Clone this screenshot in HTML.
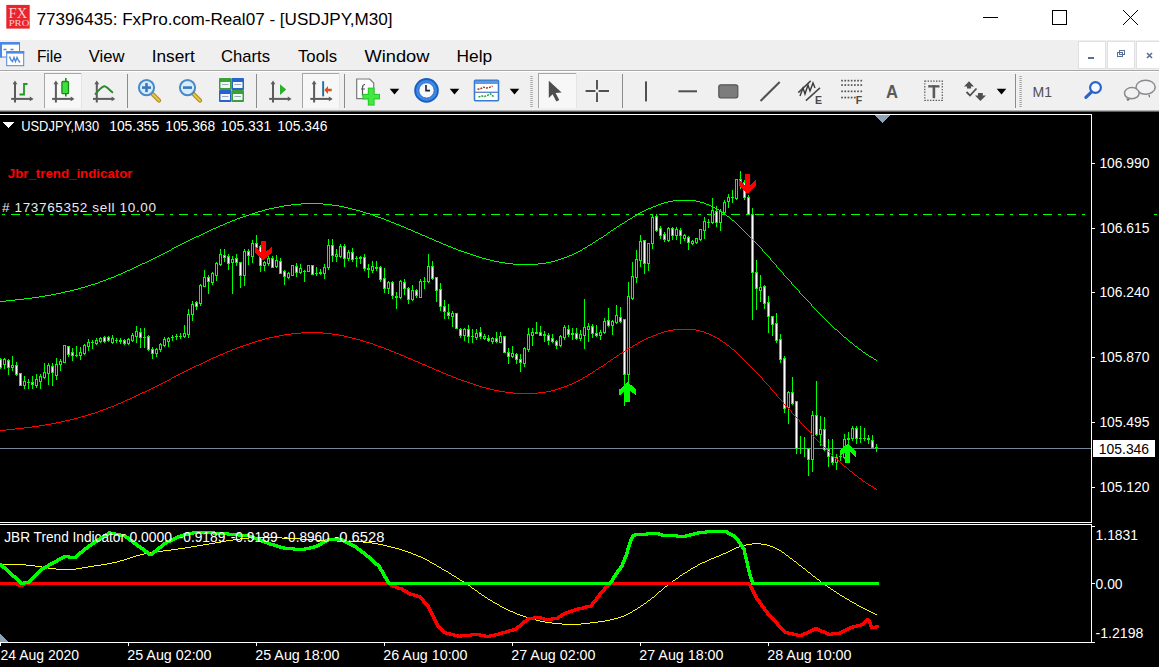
<!DOCTYPE html>
<html><head><meta charset="utf-8"><style>
html,body{margin:0;padding:0;width:1159px;height:667px;overflow:hidden;background:#000;}
svg{position:absolute;left:0;top:0;}
text{font-family:"Liberation Sans", sans-serif;}
.t{position:absolute;font-family:"Liberation Sans", sans-serif;white-space:nowrap;}
</style></head><body>
<svg width="1159" height="667" viewBox="0 0 1159 667" shape-rendering="crispEdges">
<rect x="0" y="0" width="1159" height="40" fill="#fff"/>
<rect x="0" y="40" width="1159" height="30" fill="#efefef"/>
<rect x="0" y="70" width="1159" height="1" fill="#a8a8a8"/>
<rect x="0" y="71" width="1159" height="1" fill="#fff"/>
<rect x="0" y="72" width="1159" height="38" fill="#f0f0f0"/>
<rect x="0" y="110" width="1159" height="1" fill="#b4b4b4"/>
<rect x="0" y="111" width="1159" height="1" fill="#606060"/>
<rect x="0" y="112" width="1159" height="555" fill="#000"/><path fill="#00ff00" d="M2 214h3v1h-3zM11 214h9v1h-9zM26 214h3v1h-3zM35 214h9v1h-9zM50 214h3v1h-3zM59 214h9v1h-9zM74 214h3v1h-3zM83 214h9v1h-9zM98 214h3v1h-3zM107 214h9v1h-9zM122 214h3v1h-3zM131 214h9v1h-9zM146 214h3v1h-3zM155 214h9v1h-9zM170 214h3v1h-3zM179 214h9v1h-9zM194 214h3v1h-3zM203 214h9v1h-9zM218 214h3v1h-3zM227 214h9v1h-9zM242 214h3v1h-3zM251 214h9v1h-9zM266 214h3v1h-3zM275 214h9v1h-9zM290 214h3v1h-3zM299 214h9v1h-9zM314 214h3v1h-3zM323 214h9v1h-9zM338 214h3v1h-3zM347 214h9v1h-9zM362 214h3v1h-3zM371 214h9v1h-9zM386 214h3v1h-3zM395 214h9v1h-9zM410 214h3v1h-3zM419 214h9v1h-9zM434 214h3v1h-3zM443 214h9v1h-9zM458 214h3v1h-3zM467 214h9v1h-9zM482 214h3v1h-3zM491 214h9v1h-9zM506 214h3v1h-3zM515 214h9v1h-9zM530 214h3v1h-3zM539 214h9v1h-9zM554 214h3v1h-3zM563 214h9v1h-9zM578 214h3v1h-3zM587 214h9v1h-9zM602 214h3v1h-3zM611 214h9v1h-9zM626 214h3v1h-3zM635 214h9v1h-9zM650 214h3v1h-3zM659 214h9v1h-9zM674 214h3v1h-3zM683 214h9v1h-9zM698 214h3v1h-3zM707 214h9v1h-9zM722 214h3v1h-3zM731 214h9v1h-9zM746 214h3v1h-3zM755 214h9v1h-9zM770 214h3v1h-3zM779 214h9v1h-9zM794 214h3v1h-3zM803 214h9v1h-9zM818 214h3v1h-3zM827 214h9v1h-9zM842 214h3v1h-3zM851 214h9v1h-9zM866 214h3v1h-3zM875 214h9v1h-9zM890 214h3v1h-3zM899 214h9v1h-9zM914 214h3v1h-3zM923 214h9v1h-9zM938 214h3v1h-3zM947 214h9v1h-9zM962 214h3v1h-3zM971 214h9v1h-9zM986 214h3v1h-3zM995 214h9v1h-9zM1010 214h3v1h-3zM1019 214h9v1h-9zM1034 214h3v1h-3zM1043 214h9v1h-9zM1058 214h3v1h-3zM1067 214h9v1h-9zM1082 214h3v1h-3z"/><rect x="1154" y="214" width="3" height="1" fill="#00ff00"/><rect x="0" y="448" width="1091" height="1" fill="#778899"/><path fill="#00ff00" d="M0 358h1v11h-1zM-1 359h3v9h-3zM4 358h1v11h-1zM3 359h3v6h-3zM8 359h1v16h-1zM7 360h3v8h-3zM12 356h1v15h-1zM11 365h3v3h-3zM16 362h1v14h-1zM15 365h3v10h-3zM20 373h1v13h-1zM19 373h3v13h-3zM24 376h1v13h-1zM23 381h3v5h-3zM28 379h1v10h-1zM27 382h3v1h-3zM32 376h1v13h-1zM31 382h3v3h-3zM36 374h1v14h-1zM35 379h3v7h-3zM40 374h1v15h-1zM39 376h3v6h-3zM44 363h1v16h-1zM43 372h3v6h-3zM48 363h1v22h-1zM47 365h3v9h-3zM52 363h1v23h-1zM51 366h3v7h-3zM56 358h1v22h-1zM55 364h3v12h-3zM60 359h1v12h-1zM59 361h3v4h-3zM64 345h1v18h-1zM63 345h3v18h-3zM68 346h1v11h-1zM67 346h3v9h-3zM72 348h1v13h-1zM71 352h3v4h-3zM76 346h1v11h-1zM75 355h3v1h-3zM80 347h1v13h-1zM79 352h3v4h-3zM84 344h1v11h-1zM83 345h3v9h-3zM88 339h1v12h-1zM87 342h3v5h-3zM92 340h1v9h-1zM91 342h3v1h-3zM96 338h1v7h-1zM95 340h3v4h-3zM100 337h1v6h-1zM99 338h3v4h-3zM104 336h1v7h-1zM103 337h3v5h-3zM108 336h1v6h-1zM107 337h3v4h-3zM112 335h1v9h-1zM111 338h3v5h-3zM116 338h1v5h-1zM115 340h3v1h-3zM120 338h1v6h-1zM119 340h3v2h-3zM124 339h1v6h-1zM123 340h3v4h-3zM128 338h1v7h-1zM127 339h3v5h-3zM132 333h1v9h-1zM131 335h3v6h-3zM136 326h1v17h-1zM135 331h3v6h-3zM140 328h1v20h-1zM139 332h3v6h-3zM144 328h1v20h-1zM143 337h3v1h-3zM148 335h1v16h-1zM147 336h3v14h-3zM152 347h1v12h-1zM151 349h3v5h-3zM156 348h1v9h-1zM155 349h3v5h-3zM160 343h1v9h-1zM159 344h3v6h-3zM164 337h1v10h-1zM163 339h3v7h-3zM168 337h1v10h-1zM167 338h3v4h-3zM172 335h1v6h-1zM171 337h3v1h-3zM176 334h1v6h-1zM175 336h3v1h-3zM180 333h1v6h-1zM179 336h3v1h-3zM184 325h1v13h-1zM183 333h3v4h-3zM188 309h1v29h-1zM187 314h3v21h-3zM192 301h1v20h-1zM191 304h3v11h-3zM196 301h1v9h-1zM195 302h3v5h-3zM200 284h1v22h-1zM199 285h3v19h-3zM204 270h1v17h-1zM203 277h3v10h-3zM208 275h1v19h-1zM207 277h3v5h-3zM212 272h1v13h-1zM211 273h3v10h-3zM216 262h1v19h-1zM215 263h3v13h-3zM220 249h1v17h-1zM219 254h3v11h-3zM224 249h1v13h-1zM223 255h3v3h-3zM228 254h1v16h-1zM227 256h3v8h-3zM232 256h1v38h-1zM231 259h3v4h-3zM236 254h1v12h-1zM235 258h3v5h-3zM240 262h1v26h-1zM239 262h3v14h-3zM244 249h1v37h-1zM243 251h3v25h-3zM248 249h1v16h-1zM247 251h3v5h-3zM252 240h1v23h-1zM251 243h3v14h-3zM256 235h1v15h-1zM255 243h3v5h-3zM260 245h1v27h-1zM259 246h3v20h-3zM264 261h1v10h-1zM263 262h3v4h-3zM268 256h1v10h-1zM267 258h3v6h-3zM272 256h1v12h-1zM271 258h3v10h-3zM276 255h1v13h-1zM275 260h3v7h-3zM280 258h1v16h-1zM279 261h3v13h-3zM284 270h1v15h-1zM283 271h3v6h-3zM288 272h1v7h-1zM287 273h3v5h-3zM292 265h1v11h-1zM291 265h3v11h-3zM296 263h1v14h-1zM295 266h3v7h-3zM300 264h1v10h-1zM299 268h3v5h-3zM304 270h1v12h-1zM303 271h3v1h-3zM308 265h1v7h-1zM307 265h3v7h-3zM312 265h1v10h-1zM311 265h3v10h-3zM316 267h1v9h-1zM315 273h3v1h-3zM320 269h1v6h-1zM319 272h3v2h-3zM324 264h1v15h-1zM323 267h3v7h-3zM328 239h1v31h-1zM327 245h3v23h-3zM332 239h1v23h-1zM331 245h3v11h-3zM336 249h1v13h-1zM335 254h3v3h-3zM340 244h1v14h-1zM339 246h3v11h-3zM344 244h1v23h-1zM343 246h3v13h-3zM348 250h1v11h-1zM347 252h3v7h-3zM352 248h1v14h-1zM351 252h3v8h-3zM356 256h1v11h-1zM355 258h3v1h-3zM360 256h1v8h-1zM359 257h3v2h-3zM364 254h1v17h-1zM363 257h3v12h-3zM368 264h1v14h-1zM367 268h3v2h-3zM372 261h1v12h-1zM371 266h3v5h-3zM376 261h1v10h-1zM375 267h3v2h-3zM380 266h1v16h-1zM379 267h3v13h-3zM384 268h1v25h-1zM383 278h3v11h-3zM388 281h1v13h-1zM387 282h3v7h-3zM392 281h1v18h-1zM391 282h3v14h-3zM396 292h1v17h-1zM395 296h3v2h-3zM400 280h1v19h-1zM399 281h3v17h-3zM404 279h1v16h-1zM403 282h3v7h-3zM408 287h1v17h-1zM407 288h3v12h-3zM412 285h1v16h-1zM411 290h3v10h-3zM416 289h1v9h-1zM415 290h3v6h-3zM420 279h1v19h-1zM419 281h3v17h-3zM424 277h1v12h-1zM423 281h3v1h-3zM428 254h1v29h-1zM427 266h3v16h-3zM432 261h1v19h-1zM431 266h3v13h-3zM436 277h1v25h-1zM435 277h3v14h-3zM440 283h1v28h-1zM439 289h3v18h-3zM444 300h1v19h-1zM443 306h3v6h-3zM448 304h1v15h-1zM447 312h3v4h-3zM452 311h1v16h-1zM451 313h3v4h-3zM456 313h1v16h-1zM455 313h3v16h-3zM460 328h1v10h-1zM459 329h3v7h-3zM464 328h1v13h-1zM463 329h3v7h-3zM468 325h1v18h-1zM467 329h3v8h-3zM472 329h1v14h-1zM471 336h3v1h-3zM476 329h1v11h-1zM475 333h3v5h-3zM480 327h1v12h-1zM479 332h3v5h-3zM484 334h1v6h-1zM483 336h3v3h-3zM488 335h1v7h-1zM487 338h3v3h-3zM492 337h1v7h-1zM491 338h3v4h-3zM496 332h1v11h-1zM495 338h3v4h-3zM500 332h1v11h-1zM499 336h3v7h-3zM504 336h1v17h-1zM503 336h3v17h-3zM508 348h1v16h-1zM507 352h3v5h-3zM512 346h1v12h-1zM511 353h3v4h-3zM516 353h1v11h-1zM515 354h3v6h-3zM520 354h1v18h-1zM519 359h3v4h-3zM524 347h1v20h-1zM523 348h3v16h-3zM528 328h1v24h-1zM527 334h3v16h-3zM532 328h1v18h-1zM531 332h3v4h-3zM536 322h1v12h-1zM535 332h3v2h-3zM540 326h1v10h-1zM539 332h3v4h-3zM544 331h1v11h-1zM543 334h3v2h-3zM548 333h1v12h-1zM547 335h3v6h-3zM552 334h1v9h-1zM551 338h3v4h-3zM556 340h1v9h-1zM555 341h3v5h-3zM560 335h1v12h-1zM559 336h3v10h-3zM564 325h1v15h-1zM563 327h3v11h-3zM568 325h1v12h-1zM567 329h3v6h-3zM572 328h1v12h-1zM571 333h3v2h-3zM576 328h1v12h-1zM575 333h3v6h-3zM580 330h1v11h-1zM579 334h3v5h-3zM584 299h1v50h-1zM583 327h3v9h-3zM588 323h1v19h-1zM587 326h3v4h-3zM592 324h1v14h-1zM591 326h3v8h-3zM596 325h1v12h-1zM595 333h3v3h-3zM600 330h1v10h-1zM599 332h3v4h-3zM604 318h1v16h-1zM603 321h3v12h-3zM608 308h1v19h-1zM607 320h3v6h-3zM612 320h1v15h-1zM611 321h3v5h-3zM616 305h1v19h-1zM615 315h3v8h-3zM620 307h1v16h-1zM619 317h3v5h-3zM624 319h1v87h-1zM623 319h3v56h-3zM628 282h1v101h-1zM627 296h3v79h-3zM632 262h1v38h-1zM631 276h3v23h-3zM636 250h1v33h-1zM635 259h3v19h-3zM640 235h1v32h-1zM639 241h3v20h-3zM644 240h1v34h-1zM643 240h3v24h-3zM648 243h1v28h-1zM647 243h3v21h-3zM652 214h1v35h-1zM651 217h3v27h-3zM656 214h1v18h-1zM655 216h3v15h-3zM660 226h1v13h-1zM659 228h3v8h-3zM664 232h1v10h-1zM663 234h3v6h-3zM668 227h1v15h-1zM667 228h3v13h-3zM672 227h1v13h-1zM671 228h3v8h-3zM676 227h1v13h-1zM675 229h3v7h-3zM680 228h1v16h-1zM679 230h3v6h-3zM684 234h1v7h-1zM683 235h3v4h-3zM688 236h1v14h-1zM687 237h3v6h-3zM692 240h1v5h-1zM691 241h3v3h-3zM696 238h1v6h-1zM695 238h3v5h-3zM700 229h1v12h-1zM699 229h3v11h-3zM704 217h1v22h-1zM703 221h3v10h-3zM708 219h1v9h-1zM707 222h3v1h-3zM712 198h1v26h-1zM711 210h3v13h-3zM716 206h1v21h-1zM715 211h3v12h-3zM720 209h1v22h-1zM719 211h3v12h-3zM724 200h1v15h-1zM723 202h3v11h-3zM728 194h1v14h-1zM727 197h3v5h-3zM732 190h1v13h-1zM731 197h3v1h-3zM736 179h1v21h-1zM735 179h3v20h-3zM740 171h1v18h-1zM739 179h3v4h-3zM744 180h1v20h-1zM743 182h3v16h-3zM748 195h1v20h-1zM747 197h3v18h-3zM752 208h1v112h-1zM751 214h3v59h-3zM756 260h1v50h-1zM755 272h3v17h-3zM760 275h1v27h-1zM759 287h3v4h-3zM764 285h1v24h-1zM763 286h3v18h-3zM768 296h1v37h-1zM767 302h3v15h-3zM772 316h1v20h-1zM771 316h3v9h-3zM776 313h1v30h-1zM775 323h3v18h-3zM780 334h1v29h-1zM779 339h3v21h-3zM784 356h1v57h-1zM783 358h3v51h-3zM788 391h1v33h-1zM787 392h3v16h-3zM792 377h1v28h-1zM791 392h3v12h-3zM796 401h1v53h-1zM795 401h3v48h-3zM800 436h1v18h-1zM799 448h3v1h-3zM804 437h1v20h-1zM803 448h3v1h-3zM808 448h1v28h-1zM807 448h3v12h-3zM812 411h1v61h-1zM811 415h3v45h-3zM816 381h1v55h-1zM815 415h3v20h-3zM820 416h1v30h-1zM819 429h3v6h-3zM824 417h1v34h-1zM823 429h3v21h-3zM828 439h1v28h-1zM827 449h3v8h-3zM832 439h1v26h-1zM831 456h3v7h-3zM836 454h1v16h-1zM835 457h3v6h-3zM840 450h1v11h-1zM839 456h3v1h-3zM844 434h1v25h-1zM843 439h3v19h-3zM848 432h1v12h-1zM847 438h3v2h-3zM852 426h1v15h-1zM851 428h3v11h-3zM856 426h1v18h-1zM855 428h3v11h-3zM860 426h1v17h-1zM859 438h3v1h-3zM864 428h1v13h-1zM863 438h3v1h-3zM868 435h1v9h-1zM867 438h3v2h-3zM872 435h1v13h-1zM871 440h3v8h-3zM876 444h1v8h-1zM875 447h3v1h-3z"/><path fill="#ffffff" d="M0 360h1v7h-1zM8 361h1v6h-1zM16 366h1v8h-1zM20 374h1v11h-1zM32 383h1v1h-1zM52 367h1v5h-1zM68 347h1v7h-1zM72 353h1v2h-1zM104 338h1v3h-1zM108 338h1v2h-1zM124 341h1v2h-1zM140 333h1v4h-1zM148 337h1v12h-1zM152 350h1v3h-1zM196 303h1v3h-1zM208 278h1v3h-1zM224 256h1v1h-1zM228 257h1v6h-1zM236 259h1v3h-1zM240 263h1v12h-1zM248 252h1v3h-1zM256 244h1v3h-1zM260 247h1v18h-1zM272 259h1v8h-1zM280 262h1v11h-1zM284 272h1v4h-1zM296 267h1v5h-1zM312 266h1v8h-1zM332 246h1v9h-1zM344 247h1v11h-1zM352 253h1v6h-1zM364 258h1v10h-1zM380 268h1v11h-1zM384 279h1v9h-1zM392 283h1v12h-1zM404 283h1v5h-1zM408 289h1v10h-1zM416 291h1v4h-1zM432 267h1v11h-1zM436 278h1v12h-1zM440 290h1v16h-1zM444 307h1v4h-1zM448 313h1v2h-1zM456 314h1v14h-1zM460 330h1v5h-1zM468 330h1v6h-1zM480 333h1v3h-1zM488 339h1v1h-1zM496 339h1v2h-1zM504 337h1v15h-1zM508 353h1v3h-1zM516 355h1v4h-1zM520 360h1v2h-1zM540 333h1v2h-1zM548 336h1v4h-1zM552 339h1v2h-1zM556 342h1v3h-1zM568 330h1v4h-1zM576 334h1v4h-1zM592 327h1v6h-1zM596 334h1v1h-1zM608 321h1v4h-1zM620 318h1v3h-1zM624 320h1v54h-1zM644 241h1v22h-1zM656 217h1v13h-1zM660 229h1v6h-1zM664 235h1v4h-1zM672 229h1v6h-1zM680 231h1v4h-1zM688 238h1v4h-1zM716 212h1v10h-1zM740 180h1v2h-1zM744 183h1v14h-1zM748 198h1v16h-1zM752 215h1v57h-1zM756 273h1v15h-1zM764 287h1v16h-1zM768 303h1v13h-1zM772 317h1v7h-1zM776 324h1v16h-1zM780 340h1v19h-1zM784 359h1v49h-1zM792 393h1v10h-1zM796 402h1v46h-1zM808 449h1v10h-1zM816 416h1v18h-1zM824 430h1v19h-1zM828 450h1v6h-1zM832 457h1v5h-1zM856 429h1v9h-1zM872 441h1v6h-1z"/><path fill="#000000" d="M4 360h1v4h-1zM12 366h1v1h-1zM24 382h1v3h-1zM36 380h1v5h-1zM40 377h1v4h-1zM44 373h1v4h-1zM48 366h1v7h-1zM56 365h1v10h-1zM60 362h1v2h-1zM64 346h1v16h-1zM80 353h1v2h-1zM84 346h1v7h-1zM88 343h1v3h-1zM96 341h1v2h-1zM100 339h1v2h-1zM112 339h1v3h-1zM128 340h1v3h-1zM132 336h1v4h-1zM136 332h1v4h-1zM156 350h1v3h-1zM160 345h1v4h-1zM164 340h1v5h-1zM168 339h1v2h-1zM184 334h1v2h-1zM188 315h1v19h-1zM192 305h1v9h-1zM200 286h1v17h-1zM204 278h1v8h-1zM212 274h1v8h-1zM216 264h1v11h-1zM220 255h1v9h-1zM232 260h1v2h-1zM244 252h1v23h-1zM252 244h1v12h-1zM264 263h1v2h-1zM268 259h1v4h-1zM276 261h1v5h-1zM288 274h1v3h-1zM292 266h1v9h-1zM300 269h1v3h-1zM308 266h1v5h-1zM324 268h1v5h-1zM328 246h1v21h-1zM336 255h1v1h-1zM340 247h1v9h-1zM348 253h1v5h-1zM372 267h1v3h-1zM388 283h1v5h-1zM400 282h1v15h-1zM412 291h1v8h-1zM420 282h1v15h-1zM428 267h1v14h-1zM452 314h1v2h-1zM464 330h1v5h-1zM476 334h1v3h-1zM484 337h1v1h-1zM492 339h1v2h-1zM500 337h1v5h-1zM512 354h1v2h-1zM524 349h1v14h-1zM528 335h1v14h-1zM532 333h1v2h-1zM560 337h1v8h-1zM564 328h1v9h-1zM580 335h1v3h-1zM584 328h1v7h-1zM588 327h1v2h-1zM600 333h1v2h-1zM604 322h1v10h-1zM612 322h1v3h-1zM616 316h1v6h-1zM628 297h1v77h-1zM632 277h1v21h-1zM636 260h1v17h-1zM640 242h1v18h-1zM648 244h1v19h-1zM652 218h1v25h-1zM668 229h1v11h-1zM676 230h1v5h-1zM684 236h1v2h-1zM692 242h1v1h-1zM696 239h1v3h-1zM700 230h1v9h-1zM704 222h1v8h-1zM712 211h1v11h-1zM720 212h1v10h-1zM724 203h1v9h-1zM728 198h1v3h-1zM736 180h1v18h-1zM760 288h1v2h-1zM788 393h1v14h-1zM812 416h1v43h-1zM820 430h1v4h-1zM836 458h1v4h-1zM844 440h1v17h-1zM852 429h1v9h-1z"/><path fill="#00ff00" d="M0 301h1v1h-1zM1 301h1v1h-1zM2 301h1v1h-1zM3 301h1v1h-1zM4 301h1v1h-1zM5 301h1v1h-1zM6 300h1v1h-1zM7 300h1v1h-1zM8 300h1v1h-1zM9 300h1v1h-1zM10 300h1v1h-1zM11 300h1v1h-1zM12 300h1v1h-1zM13 300h1v1h-1zM14 300h1v1h-1zM15 299h1v1h-1zM16 299h1v1h-1zM17 299h1v1h-1zM18 299h1v1h-1zM19 299h1v1h-1zM20 299h1v1h-1zM21 299h1v1h-1zM22 299h1v1h-1zM23 299h1v1h-1zM24 298h1v1h-1zM25 298h1v1h-1zM26 298h1v1h-1zM27 298h1v1h-1zM28 298h1v1h-1zM29 298h1v1h-1zM30 298h1v1h-1zM31 298h1v1h-1zM32 297h1v1h-1zM33 297h1v1h-1zM34 297h1v1h-1zM35 297h1v1h-1zM36 297h1v1h-1zM37 297h1v1h-1zM38 297h1v1h-1zM39 296h1v1h-1zM40 296h1v1h-1zM41 296h1v1h-1zM42 296h1v1h-1zM43 296h1v1h-1zM44 296h1v1h-1zM45 295h1v1h-1zM46 295h1v1h-1zM47 295h1v1h-1zM48 295h1v1h-1zM49 295h1v1h-1zM50 295h1v1h-1zM51 294h1v1h-1zM52 294h1v1h-1zM53 294h1v1h-1zM54 294h1v1h-1zM55 294h1v1h-1zM56 293h1v1h-1zM57 293h1v1h-1zM58 293h1v1h-1zM59 293h1v1h-1zM60 293h1v1h-1zM61 292h1v1h-1zM62 292h1v1h-1zM63 292h1v1h-1zM64 292h1v1h-1zM65 291h1v1h-1zM66 291h1v1h-1zM67 291h1v1h-1zM68 291h1v1h-1zM69 291h1v1h-1zM70 290h1v1h-1zM71 290h1v1h-1zM72 290h1v1h-1zM73 290h1v1h-1zM74 289h1v1h-1zM75 289h1v1h-1zM76 289h1v1h-1zM77 289h1v1h-1zM78 288h1v1h-1zM79 288h1v1h-1zM80 288h1v1h-1zM81 287h1v1h-1zM82 287h1v1h-1zM83 287h1v1h-1zM84 287h1v1h-1zM85 286h1v1h-1zM86 286h1v1h-1zM87 286h1v1h-1zM88 285h1v1h-1zM89 285h1v1h-1zM90 285h1v1h-1zM91 284h1v1h-1zM92 284h1v1h-1zM93 284h1v1h-1zM94 284h1v1h-1zM95 283h1v1h-1zM96 283h1v1h-1zM97 283h1v1h-1zM98 282h1v1h-1zM99 282h1v1h-1zM100 281h1v1h-1zM101 281h1v1h-1zM102 281h1v1h-1zM103 280h1v1h-1zM104 280h1v1h-1zM105 280h1v1h-1zM106 279h1v1h-1zM107 279h1v1h-1zM108 278h1v1h-1zM109 278h1v1h-1zM110 278h1v1h-1zM111 277h1v1h-1zM112 277h1v1h-1zM113 277h1v1h-1zM114 276h1v1h-1zM115 276h1v1h-1zM116 275h1v1h-1zM117 275h1v1h-1zM118 274h1v1h-1zM119 274h1v1h-1zM120 274h1v1h-1zM121 273h1v1h-1zM122 273h1v1h-1zM123 272h1v1h-1zM124 272h1v1h-1zM125 271h1v1h-1zM126 271h1v1h-1zM127 270h1v1h-1zM128 270h1v1h-1zM129 270h1v1h-1zM130 269h1v1h-1zM131 269h1v1h-1zM132 268h1v1h-1zM133 268h1v1h-1zM134 267h1v1h-1zM135 267h1v1h-1zM136 266h1v1h-1zM137 266h1v1h-1zM138 265h1v1h-1zM139 265h1v1h-1zM140 264h1v1h-1zM141 264h1v1h-1zM142 263h1v1h-1zM143 263h1v1h-1zM144 263h1v1h-1zM145 262h1v1h-1zM146 262h1v1h-1zM147 261h1v1h-1zM148 261h1v1h-1zM149 260h1v1h-1zM150 260h1v1h-1zM151 259h1v1h-1zM152 259h1v1h-1zM153 258h1v1h-1zM154 258h1v1h-1zM155 257h1v1h-1zM156 257h1v1h-1zM157 256h1v1h-1zM158 256h1v1h-1zM159 255h1v1h-1zM160 255h1v1h-1zM161 254h1v1h-1zM162 254h1v1h-1zM163 253h1v1h-1zM164 253h1v1h-1zM165 252h1v1h-1zM166 252h1v1h-1zM167 251h1v1h-1zM168 251h1v1h-1zM169 250h1v1h-1zM170 250h1v1h-1zM171 249h1v1h-1zM172 248h1v1h-1zM173 248h1v1h-1zM174 247h1v1h-1zM175 247h1v1h-1zM176 246h1v1h-1zM177 246h1v1h-1zM178 245h1v1h-1zM179 245h1v1h-1zM180 244h1v1h-1zM181 244h1v1h-1zM182 243h1v1h-1zM183 243h1v1h-1zM184 242h1v1h-1zM185 242h1v1h-1zM186 241h1v1h-1zM187 241h1v1h-1zM188 240h1v1h-1zM189 240h1v1h-1zM190 239h1v1h-1zM191 239h1v1h-1zM192 238h1v1h-1zM193 238h1v1h-1zM194 237h1v1h-1zM195 237h1v1h-1zM196 236h1v1h-1zM197 236h1v1h-1zM198 236h1v1h-1zM199 235h1v1h-1zM200 235h1v1h-1zM201 234h1v1h-1zM202 234h1v1h-1zM203 233h1v1h-1zM204 233h1v1h-1zM205 232h1v1h-1zM206 232h1v1h-1zM207 231h1v1h-1zM208 231h1v1h-1zM209 230h1v1h-1zM210 230h1v1h-1zM211 229h1v1h-1zM212 229h1v1h-1zM213 228h1v1h-1zM214 228h1v1h-1zM215 228h1v1h-1zM216 227h1v1h-1zM217 227h1v1h-1zM218 226h1v1h-1zM219 226h1v1h-1zM220 225h1v1h-1zM221 225h1v1h-1zM222 225h1v1h-1zM223 224h1v1h-1zM224 224h1v1h-1zM225 223h1v1h-1zM226 223h1v1h-1zM227 222h1v1h-1zM228 222h1v1h-1zM229 222h1v1h-1zM230 221h1v1h-1zM231 221h1v1h-1zM232 220h1v1h-1zM233 220h1v1h-1zM234 220h1v1h-1zM235 219h1v1h-1zM236 219h1v1h-1zM237 218h1v1h-1zM238 218h1v1h-1zM239 218h1v1h-1zM240 217h1v1h-1zM241 217h1v1h-1zM242 217h1v1h-1zM243 216h1v1h-1zM244 216h1v1h-1zM245 216h1v1h-1zM246 215h1v1h-1zM247 215h1v1h-1zM248 215h1v1h-1zM249 214h1v1h-1zM250 214h1v1h-1zM251 214h1v1h-1zM252 213h1v1h-1zM253 213h1v1h-1zM254 213h1v1h-1zM255 212h1v1h-1zM256 212h1v1h-1zM257 212h1v1h-1zM258 211h1v1h-1zM259 211h1v1h-1zM260 211h1v1h-1zM261 211h1v1h-1zM262 210h1v1h-1zM263 210h1v1h-1zM264 210h1v1h-1zM265 209h1v1h-1zM266 209h1v1h-1zM267 209h1v1h-1zM268 209h1v1h-1zM269 208h1v1h-1zM270 208h1v1h-1zM271 208h1v1h-1zM272 208h1v1h-1zM273 208h1v1h-1zM274 207h1v1h-1zM275 207h1v1h-1zM276 207h1v1h-1zM277 207h1v1h-1zM278 207h1v1h-1zM279 206h1v1h-1zM280 206h1v1h-1zM281 206h1v1h-1zM282 206h1v1h-1zM283 206h1v1h-1zM284 205h1v1h-1zM285 205h1v1h-1zM286 205h1v1h-1zM287 205h1v1h-1zM288 205h1v1h-1zM289 205h1v1h-1zM290 205h1v1h-1zM291 204h1v1h-1zM292 204h1v1h-1zM293 204h1v1h-1zM294 204h1v1h-1zM295 204h1v1h-1zM296 204h1v1h-1zM297 204h1v1h-1zM298 204h1v1h-1zM299 204h1v1h-1zM300 204h1v1h-1zM301 203h1v1h-1zM302 203h1v1h-1zM303 203h1v1h-1zM304 203h1v1h-1zM305 203h1v1h-1zM306 203h1v1h-1zM307 203h1v1h-1zM308 203h1v1h-1zM309 203h1v1h-1zM310 203h1v1h-1zM311 203h1v1h-1zM312 203h1v1h-1zM313 203h1v1h-1zM314 203h1v1h-1zM315 203h1v1h-1zM316 203h1v1h-1zM317 203h1v1h-1zM318 203h1v1h-1zM319 203h1v1h-1zM320 203h1v1h-1zM321 203h1v1h-1zM322 203h1v1h-1zM323 204h1v1h-1zM324 204h1v1h-1zM325 204h1v1h-1zM326 204h1v1h-1zM327 204h1v1h-1zM328 204h1v1h-1zM329 204h1v1h-1zM330 204h1v1h-1zM331 204h1v1h-1zM332 205h1v1h-1zM333 205h1v1h-1zM334 205h1v1h-1zM335 205h1v1h-1zM336 205h1v1h-1zM337 205h1v1h-1zM338 205h1v1h-1zM339 206h1v1h-1zM340 206h1v1h-1zM341 206h1v1h-1zM342 206h1v1h-1zM343 206h1v1h-1zM344 207h1v1h-1zM345 207h1v1h-1zM346 207h1v1h-1zM347 207h1v1h-1zM348 208h1v1h-1zM349 208h1v1h-1zM350 208h1v1h-1zM351 208h1v1h-1zM352 209h1v1h-1zM353 209h1v1h-1zM354 209h1v1h-1zM355 209h1v1h-1zM356 210h1v1h-1zM357 210h1v1h-1zM358 210h1v1h-1zM359 210h1v1h-1zM360 211h1v1h-1zM361 211h1v1h-1zM362 211h1v1h-1zM363 212h1v1h-1zM364 212h1v1h-1zM365 212h1v1h-1zM366 213h1v1h-1zM367 213h1v1h-1zM368 213h1v1h-1zM369 213h1v1h-1zM370 214h1v1h-1zM371 214h1v1h-1zM372 214h1v1h-1zM373 215h1v1h-1zM374 215h1v1h-1zM375 216h1v1h-1zM376 216h1v1h-1zM377 216h1v1h-1zM378 217h1v1h-1zM379 217h1v1h-1zM380 217h1v1h-1zM381 218h1v1h-1zM382 218h1v1h-1zM383 218h1v1h-1zM384 219h1v1h-1zM385 219h1v1h-1zM386 220h1v1h-1zM387 220h1v1h-1zM388 220h1v1h-1zM389 221h1v1h-1zM390 221h1v1h-1zM391 222h1v1h-1zM392 222h1v1h-1zM393 222h1v1h-1zM394 223h1v1h-1zM395 223h1v1h-1zM396 224h1v1h-1zM397 224h1v1h-1zM398 224h1v1h-1zM399 225h1v1h-1zM400 225h1v1h-1zM401 226h1v1h-1zM402 226h1v1h-1zM403 226h1v1h-1zM404 227h1v1h-1zM405 227h1v1h-1zM406 228h1v1h-1zM407 228h1v1h-1zM408 229h1v1h-1zM409 229h1v1h-1zM410 229h1v1h-1zM411 230h1v1h-1zM412 230h1v1h-1zM413 231h1v1h-1zM414 231h1v1h-1zM415 232h1v1h-1zM416 232h1v1h-1zM417 232h1v1h-1zM418 233h1v1h-1zM419 233h1v1h-1zM420 234h1v1h-1zM421 234h1v1h-1zM422 235h1v1h-1zM423 235h1v1h-1zM424 235h1v1h-1zM425 236h1v1h-1zM426 236h1v1h-1zM427 237h1v1h-1zM428 237h1v1h-1zM429 238h1v1h-1zM430 238h1v1h-1zM431 238h1v1h-1zM432 239h1v1h-1zM433 239h1v1h-1zM434 240h1v1h-1zM435 240h1v1h-1zM436 241h1v1h-1zM437 241h1v1h-1zM438 241h1v1h-1zM439 242h1v1h-1zM440 242h1v1h-1zM441 243h1v1h-1zM442 243h1v1h-1zM443 244h1v1h-1zM444 244h1v1h-1zM445 244h1v1h-1zM446 245h1v1h-1zM447 245h1v1h-1zM448 246h1v1h-1zM449 246h1v1h-1zM450 246h1v1h-1zM451 247h1v1h-1zM452 247h1v1h-1zM453 248h1v1h-1zM454 248h1v1h-1zM455 248h1v1h-1zM456 249h1v1h-1zM457 249h1v1h-1zM458 250h1v1h-1zM459 250h1v1h-1zM460 250h1v1h-1zM461 251h1v1h-1zM462 251h1v1h-1zM463 251h1v1h-1zM464 252h1v1h-1zM465 252h1v1h-1zM466 252h1v1h-1zM467 253h1v1h-1zM468 253h1v1h-1zM469 253h1v1h-1zM470 254h1v1h-1zM471 254h1v1h-1zM472 254h1v1h-1zM473 255h1v1h-1zM474 255h1v1h-1zM475 255h1v1h-1zM476 256h1v1h-1zM477 256h1v1h-1zM478 256h1v1h-1zM479 257h1v1h-1zM480 257h1v1h-1zM481 257h1v1h-1zM482 258h1v1h-1zM483 258h1v1h-1zM484 258h1v1h-1zM485 258h1v1h-1zM486 259h1v1h-1zM487 259h1v1h-1zM488 259h1v1h-1zM489 259h1v1h-1zM490 260h1v1h-1zM491 260h1v1h-1zM492 260h1v1h-1zM493 260h1v1h-1zM494 261h1v1h-1zM495 261h1v1h-1zM496 261h1v1h-1zM497 261h1v1h-1zM498 261h1v1h-1zM499 262h1v1h-1zM500 262h1v1h-1zM501 262h1v1h-1zM502 262h1v1h-1zM503 262h1v1h-1zM504 262h1v1h-1zM505 263h1v1h-1zM506 263h1v1h-1zM507 263h1v1h-1zM508 263h1v1h-1zM509 263h1v1h-1zM510 263h1v1h-1zM511 263h1v1h-1zM512 263h1v1h-1zM513 264h1v1h-1zM514 264h1v1h-1zM515 264h1v1h-1zM516 264h1v1h-1zM517 264h1v1h-1zM518 264h1v1h-1zM519 264h1v1h-1zM520 264h1v1h-1zM521 264h1v1h-1zM522 264h1v1h-1zM523 264h1v1h-1zM524 264h1v1h-1zM525 264h1v1h-1zM526 264h1v1h-1zM527 264h1v1h-1zM528 264h1v1h-1zM529 264h1v1h-1zM530 264h1v1h-1zM531 264h1v1h-1zM532 264h1v1h-1zM533 264h1v1h-1zM534 264h1v1h-1zM535 264h1v1h-1zM536 264h1v1h-1zM537 264h1v1h-1zM538 263h1v1h-1zM539 263h1v1h-1zM540 263h1v1h-1zM541 263h1v1h-1zM542 263h1v1h-1zM543 263h1v1h-1zM544 263h1v1h-1zM545 263h1v1h-1zM546 262h1v1h-1zM547 262h1v1h-1zM548 262h1v1h-1zM549 262h1v1h-1zM550 262h1v1h-1zM551 261h1v1h-1zM552 261h1v1h-1zM553 261h1v1h-1zM554 261h1v1h-1zM555 260h1v1h-1zM556 260h1v1h-1zM557 260h1v1h-1zM558 259h1v1h-1zM559 259h1v1h-1zM560 259h1v1h-1zM561 258h1v1h-1zM562 258h1v1h-1zM563 258h1v1h-1zM564 257h1v1h-1zM565 257h1v1h-1zM566 257h1v1h-1zM567 256h1v1h-1zM568 256h1v1h-1zM569 255h1v1h-1zM570 255h1v1h-1zM571 255h1v1h-1zM572 254h1v1h-1zM573 254h1v1h-1zM574 253h1v1h-1zM575 253h1v1h-1zM576 252h1v1h-1zM577 252h1v1h-1zM578 251h1v1h-1zM579 251h1v1h-1zM580 250h1v1h-1zM581 250h1v1h-1zM582 249h1v1h-1zM583 248h1v1h-1zM584 248h1v1h-1zM585 247h1v1h-1zM586 247h1v1h-1zM587 246h1v1h-1zM588 245h1v1h-1zM589 245h1v1h-1zM590 244h1v1h-1zM591 244h1v1h-1zM592 243h1v1h-1zM593 242h1v1h-1zM594 242h1v1h-1zM595 241h1v1h-1zM596 240h1v1h-1zM597 240h1v1h-1zM598 239h1v1h-1zM599 238h1v1h-1zM600 238h1v1h-1zM601 237h1v1h-1zM602 237h1v1h-1zM603 236h1v1h-1zM604 235h1v1h-1zM605 235h1v1h-1zM606 234h1v1h-1zM607 233h1v1h-1zM608 232h1v1h-1zM609 232h1v1h-1zM610 231h1v1h-1zM611 230h1v1h-1zM612 230h1v1h-1zM613 229h1v1h-1zM614 228h1v1h-1zM615 228h1v1h-1zM616 227h1v1h-1zM617 226h1v1h-1zM618 226h1v1h-1zM619 225h1v1h-1zM620 224h1v1h-1zM621 224h1v1h-1zM622 223h1v1h-1zM623 223h1v1h-1zM624 222h1v1h-1zM625 221h1v1h-1zM626 221h1v1h-1zM627 220h1v1h-1zM628 219h1v1h-1zM629 219h1v1h-1zM630 218h1v1h-1zM631 218h1v1h-1zM632 217h1v1h-1zM633 216h1v1h-1zM634 216h1v1h-1zM635 215h1v1h-1zM636 215h1v1h-1zM637 214h1v1h-1zM638 213h1v1h-1zM639 213h1v1h-1zM640 212h1v1h-1zM641 212h1v1h-1zM642 211h1v1h-1zM643 211h1v1h-1zM644 210h1v1h-1zM645 210h1v1h-1zM646 209h1v1h-1zM647 209h1v1h-1zM648 208h1v1h-1zM649 208h1v1h-1zM650 208h1v1h-1zM651 207h1v1h-1zM652 207h1v1h-1zM653 206h1v1h-1zM654 206h1v1h-1zM655 206h1v1h-1zM656 205h1v1h-1zM657 205h1v1h-1zM658 204h1v1h-1zM659 204h1v1h-1zM660 204h1v1h-1zM661 203h1v1h-1zM662 203h1v1h-1zM663 203h1v1h-1zM664 202h1v1h-1zM665 202h1v1h-1zM666 202h1v1h-1zM667 202h1v1h-1zM668 201h1v1h-1zM669 201h1v1h-1zM670 201h1v1h-1zM671 201h1v1h-1zM672 201h1v1h-1zM673 200h1v1h-1zM674 200h1v1h-1zM675 200h1v1h-1zM676 200h1v1h-1zM677 200h1v1h-1zM678 200h1v1h-1zM679 200h1v1h-1zM680 200h1v1h-1zM681 200h1v1h-1zM682 200h1v1h-1zM683 200h1v1h-1zM684 200h1v1h-1zM685 200h1v1h-1zM686 200h1v1h-1zM687 200h1v1h-1zM688 200h1v1h-1zM689 200h1v1h-1zM690 200h1v1h-1zM691 200h1v1h-1zM692 200h1v1h-1zM693 200h1v1h-1zM694 200h1v1h-1zM695 200h1v1h-1zM696 201h1v1h-1zM697 201h1v1h-1zM698 201h1v1h-1zM699 201h1v1h-1zM700 202h1v1h-1zM701 202h1v1h-1zM702 202h1v1h-1zM703 202h1v1h-1zM704 203h1v1h-1zM705 203h1v1h-1zM706 204h1v1h-1zM707 204h1v1h-1zM708 204h1v1h-1zM709 205h1v1h-1zM710 205h1v1h-1zM711 206h1v1h-1zM712 206h1v1h-1zM713 207h1v1h-1zM714 207h1v1h-1zM715 208h1v1h-1zM716 208h1v1h-1zM717 209h1v1h-1zM718 209h1v1h-1zM719 210h1v1h-1zM720 211h1v1h-1zM721 211h1v1h-1zM722 212h1v1h-1zM723 213h1v1h-1zM724 213h1v1h-1zM725 214h1v1h-1zM726 215h1v1h-1zM727 216h1v1h-1zM728 216h1v1h-1zM729 217h1v1h-1zM730 218h1v1h-1zM731 219h1v1h-1zM732 220h1v1h-1zM733 220h1v1h-1zM734 221h1v1h-1zM735 222h1v1h-1zM736 223h1v1h-1zM737 224h1v1h-1zM738 225h1v1h-1zM739 226h1v1h-1zM740 227h1v1h-1zM741 228h1v1h-1zM742 229h1v1h-1zM743 230h1v1h-1zM744 231h1v1h-1zM745 232h1v1h-1zM746 233h1v1h-1zM747 234h1v1h-1zM748 235h1v1h-1zM749 236h1v1h-1zM750 237h1v1h-1zM751 238h1v1h-1zM752 239h1v1h-1zM753 240h1v1h-1zM754 241h1v1h-1zM755 242h1v1h-1zM756 243h1v1h-1zM757 244h1v1h-1zM758 245h1v1h-1zM759 246h1v1h-1zM760 247h1v1h-1zM761 248h1v1h-1zM762 249h1v2h-1zM763 251h1v1h-1zM764 252h1v1h-1zM765 253h1v1h-1zM766 254h1v1h-1zM767 255h1v1h-1zM768 256h1v1h-1zM769 257h1v1h-1zM770 258h1v2h-1zM771 260h1v1h-1zM772 261h1v1h-1zM773 262h1v1h-1zM774 263h1v1h-1zM775 264h1v1h-1zM776 265h1v2h-1zM777 267h1v1h-1zM778 268h1v1h-1zM779 269h1v1h-1zM780 270h1v1h-1zM781 271h1v1h-1zM782 272h1v1h-1zM783 273h1v2h-1zM784 275h1v1h-1zM785 276h1v1h-1zM786 277h1v1h-1zM787 278h1v1h-1zM788 279h1v1h-1zM789 280h1v1h-1zM790 281h1v1h-1zM791 282h1v2h-1zM792 284h1v1h-1zM793 285h1v1h-1zM794 286h1v1h-1zM795 287h1v1h-1zM796 288h1v1h-1zM797 289h1v1h-1zM798 290h1v1h-1zM799 291h1v2h-1zM800 293h1v1h-1zM801 294h1v1h-1zM802 295h1v1h-1zM803 296h1v1h-1zM804 297h1v1h-1zM805 298h1v1h-1zM806 299h1v1h-1zM807 300h1v1h-1zM808 301h1v1h-1zM809 302h1v1h-1zM810 303h1v1h-1zM811 304h1v2h-1zM812 306h1v1h-1zM813 307h1v1h-1zM814 308h1v1h-1zM815 309h1v1h-1zM816 310h1v1h-1zM817 311h1v1h-1zM818 312h1v1h-1zM819 313h1v1h-1zM820 314h1v1h-1zM821 315h1v1h-1zM822 316h1v1h-1zM823 317h1v1h-1zM824 318h1v1h-1zM825 319h1v1h-1zM826 320h1v1h-1zM827 321h1v1h-1zM828 322h1v1h-1zM829 323h1v1h-1zM830 324h1v1h-1zM831 325h1v1h-1zM832 326h1v1h-1zM833 327h1v1h-1zM834 328h1v1h-1zM835 329h1v1h-1zM836 329h1v1h-1zM837 330h1v1h-1zM838 331h1v1h-1zM839 332h1v1h-1zM840 333h1v1h-1zM841 334h1v1h-1zM842 335h1v1h-1zM843 336h1v1h-1zM844 337h1v1h-1zM845 337h1v1h-1zM846 338h1v1h-1zM847 339h1v1h-1zM848 340h1v1h-1zM849 341h1v1h-1zM850 342h1v1h-1zM851 342h1v1h-1zM852 343h1v1h-1zM853 344h1v1h-1zM854 345h1v1h-1zM855 346h1v1h-1zM856 346h1v1h-1zM857 347h1v1h-1zM858 348h1v1h-1zM859 349h1v1h-1zM860 349h1v1h-1zM861 350h1v1h-1zM862 351h1v1h-1zM863 352h1v1h-1zM864 352h1v1h-1zM865 353h1v1h-1zM866 354h1v1h-1zM867 354h1v1h-1zM868 355h1v1h-1zM869 356h1v1h-1zM870 356h1v1h-1zM871 357h1v1h-1zM872 357h1v1h-1zM873 358h1v1h-1zM874 359h1v1h-1zM875 359h1v1h-1zM876 360h1v1h-1z"/><path fill="#ff0000" d="M0 430h1v1h-1zM1 430h1v1h-1zM2 430h1v1h-1zM3 430h1v1h-1zM4 430h1v1h-1zM5 430h1v1h-1zM6 429h1v1h-1zM7 429h1v1h-1zM8 429h1v1h-1zM9 429h1v1h-1zM10 429h1v1h-1zM11 429h1v1h-1zM12 429h1v1h-1zM13 429h1v1h-1zM14 429h1v1h-1zM15 428h1v1h-1zM16 428h1v1h-1zM17 428h1v1h-1zM18 428h1v1h-1zM19 428h1v1h-1zM20 428h1v1h-1zM21 428h1v1h-1zM22 428h1v1h-1zM23 428h1v1h-1zM24 427h1v1h-1zM25 427h1v1h-1zM26 427h1v1h-1zM27 427h1v1h-1zM28 427h1v1h-1zM29 427h1v1h-1zM30 427h1v1h-1zM31 427h1v1h-1zM32 426h1v1h-1zM33 426h1v1h-1zM34 426h1v1h-1zM35 426h1v1h-1zM36 426h1v1h-1zM37 426h1v1h-1zM38 426h1v1h-1zM39 425h1v1h-1zM40 425h1v1h-1zM41 425h1v1h-1zM42 425h1v1h-1zM43 425h1v1h-1zM44 425h1v1h-1zM45 424h1v1h-1zM46 424h1v1h-1zM47 424h1v1h-1zM48 424h1v1h-1zM49 424h1v1h-1zM50 424h1v1h-1zM51 423h1v1h-1zM52 423h1v1h-1zM53 423h1v1h-1zM54 423h1v1h-1zM55 423h1v1h-1zM56 422h1v1h-1zM57 422h1v1h-1zM58 422h1v1h-1zM59 422h1v1h-1zM60 422h1v1h-1zM61 421h1v1h-1zM62 421h1v1h-1zM63 421h1v1h-1zM64 421h1v1h-1zM65 420h1v1h-1zM66 420h1v1h-1zM67 420h1v1h-1zM68 420h1v1h-1zM69 420h1v1h-1zM70 419h1v1h-1zM71 419h1v1h-1zM72 419h1v1h-1zM73 419h1v1h-1zM74 418h1v1h-1zM75 418h1v1h-1zM76 418h1v1h-1zM77 418h1v1h-1zM78 417h1v1h-1zM79 417h1v1h-1zM80 417h1v1h-1zM81 416h1v1h-1zM82 416h1v1h-1zM83 416h1v1h-1zM84 416h1v1h-1zM85 415h1v1h-1zM86 415h1v1h-1zM87 415h1v1h-1zM88 414h1v1h-1zM89 414h1v1h-1zM90 414h1v1h-1zM91 413h1v1h-1zM92 413h1v1h-1zM93 413h1v1h-1zM94 413h1v1h-1zM95 412h1v1h-1zM96 412h1v1h-1zM97 412h1v1h-1zM98 411h1v1h-1zM99 411h1v1h-1zM100 410h1v1h-1zM101 410h1v1h-1zM102 410h1v1h-1zM103 409h1v1h-1zM104 409h1v1h-1zM105 409h1v1h-1zM106 408h1v1h-1zM107 408h1v1h-1zM108 407h1v1h-1zM109 407h1v1h-1zM110 407h1v1h-1zM111 406h1v1h-1zM112 406h1v1h-1zM113 406h1v1h-1zM114 405h1v1h-1zM115 405h1v1h-1zM116 404h1v1h-1zM117 404h1v1h-1zM118 403h1v1h-1zM119 403h1v1h-1zM120 403h1v1h-1zM121 402h1v1h-1zM122 402h1v1h-1zM123 401h1v1h-1zM124 401h1v1h-1zM125 400h1v1h-1zM126 400h1v1h-1zM127 399h1v1h-1zM128 399h1v1h-1zM129 399h1v1h-1zM130 398h1v1h-1zM131 398h1v1h-1zM132 397h1v1h-1zM133 397h1v1h-1zM134 396h1v1h-1zM135 396h1v1h-1zM136 395h1v1h-1zM137 395h1v1h-1zM138 394h1v1h-1zM139 394h1v1h-1zM140 393h1v1h-1zM141 393h1v1h-1zM142 392h1v1h-1zM143 392h1v1h-1zM144 392h1v1h-1zM145 391h1v1h-1zM146 391h1v1h-1zM147 390h1v1h-1zM148 390h1v1h-1zM149 389h1v1h-1zM150 389h1v1h-1zM151 388h1v1h-1zM152 388h1v1h-1zM153 387h1v1h-1zM154 387h1v1h-1zM155 386h1v1h-1zM156 386h1v1h-1zM157 385h1v1h-1zM158 385h1v1h-1zM159 384h1v1h-1zM160 384h1v1h-1zM161 383h1v1h-1zM162 383h1v1h-1zM163 382h1v1h-1zM164 382h1v1h-1zM165 381h1v1h-1zM166 381h1v1h-1zM167 380h1v1h-1zM168 380h1v1h-1zM169 379h1v1h-1zM170 379h1v1h-1zM171 378h1v1h-1zM172 377h1v1h-1zM173 377h1v1h-1zM174 376h1v1h-1zM175 376h1v1h-1zM176 375h1v1h-1zM177 375h1v1h-1zM178 374h1v1h-1zM179 374h1v1h-1zM180 373h1v1h-1zM181 373h1v1h-1zM182 372h1v1h-1zM183 372h1v1h-1zM184 371h1v1h-1zM185 371h1v1h-1zM186 370h1v1h-1zM187 370h1v1h-1zM188 369h1v1h-1zM189 369h1v1h-1zM190 368h1v1h-1zM191 368h1v1h-1zM192 367h1v1h-1zM193 367h1v1h-1zM194 366h1v1h-1zM195 366h1v1h-1zM196 365h1v1h-1zM197 365h1v1h-1zM198 365h1v1h-1zM199 364h1v1h-1zM200 364h1v1h-1zM201 363h1v1h-1zM202 363h1v1h-1zM203 362h1v1h-1zM204 362h1v1h-1zM205 361h1v1h-1zM206 361h1v1h-1zM207 360h1v1h-1zM208 360h1v1h-1zM209 359h1v1h-1zM210 359h1v1h-1zM211 358h1v1h-1zM212 358h1v1h-1zM213 357h1v1h-1zM214 357h1v1h-1zM215 357h1v1h-1zM216 356h1v1h-1zM217 356h1v1h-1zM218 355h1v1h-1zM219 355h1v1h-1zM220 354h1v1h-1zM221 354h1v1h-1zM222 354h1v1h-1zM223 353h1v1h-1zM224 353h1v1h-1zM225 352h1v1h-1zM226 352h1v1h-1zM227 351h1v1h-1zM228 351h1v1h-1zM229 351h1v1h-1zM230 350h1v1h-1zM231 350h1v1h-1zM232 349h1v1h-1zM233 349h1v1h-1zM234 349h1v1h-1zM235 348h1v1h-1zM236 348h1v1h-1zM237 347h1v1h-1zM238 347h1v1h-1zM239 347h1v1h-1zM240 346h1v1h-1zM241 346h1v1h-1zM242 346h1v1h-1zM243 345h1v1h-1zM244 345h1v1h-1zM245 345h1v1h-1zM246 344h1v1h-1zM247 344h1v1h-1zM248 344h1v1h-1zM249 343h1v1h-1zM250 343h1v1h-1zM251 343h1v1h-1zM252 342h1v1h-1zM253 342h1v1h-1zM254 342h1v1h-1zM255 341h1v1h-1zM256 341h1v1h-1zM257 341h1v1h-1zM258 340h1v1h-1zM259 340h1v1h-1zM260 340h1v1h-1zM261 340h1v1h-1zM262 339h1v1h-1zM263 339h1v1h-1zM264 339h1v1h-1zM265 338h1v1h-1zM266 338h1v1h-1zM267 338h1v1h-1zM268 338h1v1h-1zM269 337h1v1h-1zM270 337h1v1h-1zM271 337h1v1h-1zM272 337h1v1h-1zM273 337h1v1h-1zM274 336h1v1h-1zM275 336h1v1h-1zM276 336h1v1h-1zM277 336h1v1h-1zM278 336h1v1h-1zM279 335h1v1h-1zM280 335h1v1h-1zM281 335h1v1h-1zM282 335h1v1h-1zM283 335h1v1h-1zM284 334h1v1h-1zM285 334h1v1h-1zM286 334h1v1h-1zM287 334h1v1h-1zM288 334h1v1h-1zM289 334h1v1h-1zM290 334h1v1h-1zM291 333h1v1h-1zM292 333h1v1h-1zM293 333h1v1h-1zM294 333h1v1h-1zM295 333h1v1h-1zM296 333h1v1h-1zM297 333h1v1h-1zM298 333h1v1h-1zM299 333h1v1h-1zM300 333h1v1h-1zM301 332h1v1h-1zM302 332h1v1h-1zM303 332h1v1h-1zM304 332h1v1h-1zM305 332h1v1h-1zM306 332h1v1h-1zM307 332h1v1h-1zM308 332h1v1h-1zM309 332h1v1h-1zM310 332h1v1h-1zM311 332h1v1h-1zM312 332h1v1h-1zM313 332h1v1h-1zM314 332h1v1h-1zM315 332h1v1h-1zM316 332h1v1h-1zM317 332h1v1h-1zM318 332h1v1h-1zM319 332h1v1h-1zM320 332h1v1h-1zM321 332h1v1h-1zM322 332h1v1h-1zM323 333h1v1h-1zM324 333h1v1h-1zM325 333h1v1h-1zM326 333h1v1h-1zM327 333h1v1h-1zM328 333h1v1h-1zM329 333h1v1h-1zM330 333h1v1h-1zM331 333h1v1h-1zM332 334h1v1h-1zM333 334h1v1h-1zM334 334h1v1h-1zM335 334h1v1h-1zM336 334h1v1h-1zM337 334h1v1h-1zM338 334h1v1h-1zM339 335h1v1h-1zM340 335h1v1h-1zM341 335h1v1h-1zM342 335h1v1h-1zM343 335h1v1h-1zM344 336h1v1h-1zM345 336h1v1h-1zM346 336h1v1h-1zM347 336h1v1h-1zM348 337h1v1h-1zM349 337h1v1h-1zM350 337h1v1h-1zM351 337h1v1h-1zM352 338h1v1h-1zM353 338h1v1h-1zM354 338h1v1h-1zM355 338h1v1h-1zM356 339h1v1h-1zM357 339h1v1h-1zM358 339h1v1h-1zM359 339h1v1h-1zM360 340h1v1h-1zM361 340h1v1h-1zM362 340h1v1h-1zM363 341h1v1h-1zM364 341h1v1h-1zM365 341h1v1h-1zM366 342h1v1h-1zM367 342h1v1h-1zM368 342h1v1h-1zM369 342h1v1h-1zM370 343h1v1h-1zM371 343h1v1h-1zM372 343h1v1h-1zM373 344h1v1h-1zM374 344h1v1h-1zM375 345h1v1h-1zM376 345h1v1h-1zM377 345h1v1h-1zM378 346h1v1h-1zM379 346h1v1h-1zM380 346h1v1h-1zM381 347h1v1h-1zM382 347h1v1h-1zM383 347h1v1h-1zM384 348h1v1h-1zM385 348h1v1h-1zM386 349h1v1h-1zM387 349h1v1h-1zM388 349h1v1h-1zM389 350h1v1h-1zM390 350h1v1h-1zM391 351h1v1h-1zM392 351h1v1h-1zM393 351h1v1h-1zM394 352h1v1h-1zM395 352h1v1h-1zM396 353h1v1h-1zM397 353h1v1h-1zM398 353h1v1h-1zM399 354h1v1h-1zM400 354h1v1h-1zM401 355h1v1h-1zM402 355h1v1h-1zM403 355h1v1h-1zM404 356h1v1h-1zM405 356h1v1h-1zM406 357h1v1h-1zM407 357h1v1h-1zM408 358h1v1h-1zM409 358h1v1h-1zM410 358h1v1h-1zM411 359h1v1h-1zM412 359h1v1h-1zM413 360h1v1h-1zM414 360h1v1h-1zM415 361h1v1h-1zM416 361h1v1h-1zM417 361h1v1h-1zM418 362h1v1h-1zM419 362h1v1h-1zM420 363h1v1h-1zM421 363h1v1h-1zM422 364h1v1h-1zM423 364h1v1h-1zM424 364h1v1h-1zM425 365h1v1h-1zM426 365h1v1h-1zM427 366h1v1h-1zM428 366h1v1h-1zM429 367h1v1h-1zM430 367h1v1h-1zM431 367h1v1h-1zM432 368h1v1h-1zM433 368h1v1h-1zM434 369h1v1h-1zM435 369h1v1h-1zM436 370h1v1h-1zM437 370h1v1h-1zM438 370h1v1h-1zM439 371h1v1h-1zM440 371h1v1h-1zM441 372h1v1h-1zM442 372h1v1h-1zM443 373h1v1h-1zM444 373h1v1h-1zM445 373h1v1h-1zM446 374h1v1h-1zM447 374h1v1h-1zM448 375h1v1h-1zM449 375h1v1h-1zM450 375h1v1h-1zM451 376h1v1h-1zM452 376h1v1h-1zM453 377h1v1h-1zM454 377h1v1h-1zM455 377h1v1h-1zM456 378h1v1h-1zM457 378h1v1h-1zM458 379h1v1h-1zM459 379h1v1h-1zM460 379h1v1h-1zM461 380h1v1h-1zM462 380h1v1h-1zM463 380h1v1h-1zM464 381h1v1h-1zM465 381h1v1h-1zM466 381h1v1h-1zM467 382h1v1h-1zM468 382h1v1h-1zM469 382h1v1h-1zM470 383h1v1h-1zM471 383h1v1h-1zM472 383h1v1h-1zM473 384h1v1h-1zM474 384h1v1h-1zM475 384h1v1h-1zM476 385h1v1h-1zM477 385h1v1h-1zM478 385h1v1h-1zM479 386h1v1h-1zM480 386h1v1h-1zM481 386h1v1h-1zM482 387h1v1h-1zM483 387h1v1h-1zM484 387h1v1h-1zM485 387h1v1h-1zM486 388h1v1h-1zM487 388h1v1h-1zM488 388h1v1h-1zM489 388h1v1h-1zM490 389h1v1h-1zM491 389h1v1h-1zM492 389h1v1h-1zM493 389h1v1h-1zM494 390h1v1h-1zM495 390h1v1h-1zM496 390h1v1h-1zM497 390h1v1h-1zM498 390h1v1h-1zM499 391h1v1h-1zM500 391h1v1h-1zM501 391h1v1h-1zM502 391h1v1h-1zM503 391h1v1h-1zM504 391h1v1h-1zM505 392h1v1h-1zM506 392h1v1h-1zM507 392h1v1h-1zM508 392h1v1h-1zM509 392h1v1h-1zM510 392h1v1h-1zM511 392h1v1h-1zM512 392h1v1h-1zM513 393h1v1h-1zM514 393h1v1h-1zM515 393h1v1h-1zM516 393h1v1h-1zM517 393h1v1h-1zM518 393h1v1h-1zM519 393h1v1h-1zM520 393h1v1h-1zM521 393h1v1h-1zM522 393h1v1h-1zM523 393h1v1h-1zM524 393h1v1h-1zM525 393h1v1h-1zM526 393h1v1h-1zM527 393h1v1h-1zM528 393h1v1h-1zM529 393h1v1h-1zM530 393h1v1h-1zM531 393h1v1h-1zM532 393h1v1h-1zM533 393h1v1h-1zM534 393h1v1h-1zM535 393h1v1h-1zM536 393h1v1h-1zM537 393h1v1h-1zM538 392h1v1h-1zM539 392h1v1h-1zM540 392h1v1h-1zM541 392h1v1h-1zM542 392h1v1h-1zM543 392h1v1h-1zM544 392h1v1h-1zM545 392h1v1h-1zM546 391h1v1h-1zM547 391h1v1h-1zM548 391h1v1h-1zM549 391h1v1h-1zM550 391h1v1h-1zM551 390h1v1h-1zM552 390h1v1h-1zM553 390h1v1h-1zM554 390h1v1h-1zM555 389h1v1h-1zM556 389h1v1h-1zM557 389h1v1h-1zM558 388h1v1h-1zM559 388h1v1h-1zM560 388h1v1h-1zM561 387h1v1h-1zM562 387h1v1h-1zM563 387h1v1h-1zM564 386h1v1h-1zM565 386h1v1h-1zM566 386h1v1h-1zM567 385h1v1h-1zM568 385h1v1h-1zM569 384h1v1h-1zM570 384h1v1h-1zM571 384h1v1h-1zM572 383h1v1h-1zM573 383h1v1h-1zM574 382h1v1h-1zM575 382h1v1h-1zM576 381h1v1h-1zM577 381h1v1h-1zM578 380h1v1h-1zM579 380h1v1h-1zM580 379h1v1h-1zM581 379h1v1h-1zM582 378h1v1h-1zM583 377h1v1h-1zM584 377h1v1h-1zM585 376h1v1h-1zM586 376h1v1h-1zM587 375h1v1h-1zM588 374h1v1h-1zM589 374h1v1h-1zM590 373h1v1h-1zM591 373h1v1h-1zM592 372h1v1h-1zM593 371h1v1h-1zM594 371h1v1h-1zM595 370h1v1h-1zM596 369h1v1h-1zM597 369h1v1h-1zM598 368h1v1h-1zM599 367h1v1h-1zM600 367h1v1h-1zM601 366h1v1h-1zM602 366h1v1h-1zM603 365h1v1h-1zM604 364h1v1h-1zM605 364h1v1h-1zM606 363h1v1h-1zM607 362h1v1h-1zM608 361h1v1h-1zM609 361h1v1h-1zM610 360h1v1h-1zM611 359h1v1h-1zM612 359h1v1h-1zM613 358h1v1h-1zM614 357h1v1h-1zM615 357h1v1h-1zM616 356h1v1h-1zM617 355h1v1h-1zM618 355h1v1h-1zM619 354h1v1h-1zM620 353h1v1h-1zM621 353h1v1h-1zM622 352h1v1h-1zM623 352h1v1h-1zM624 351h1v1h-1zM625 350h1v1h-1zM626 350h1v1h-1zM627 349h1v1h-1zM628 348h1v1h-1zM629 348h1v1h-1zM630 347h1v1h-1zM631 347h1v1h-1zM632 346h1v1h-1zM633 345h1v1h-1zM634 345h1v1h-1zM635 344h1v1h-1zM636 344h1v1h-1zM637 343h1v1h-1zM638 342h1v1h-1zM639 342h1v1h-1zM640 341h1v1h-1zM641 341h1v1h-1zM642 340h1v1h-1zM643 340h1v1h-1zM644 339h1v1h-1zM645 339h1v1h-1zM646 338h1v1h-1zM647 338h1v1h-1zM648 337h1v1h-1zM649 337h1v1h-1zM650 337h1v1h-1zM651 336h1v1h-1zM652 336h1v1h-1zM653 335h1v1h-1zM654 335h1v1h-1zM655 335h1v1h-1zM656 334h1v1h-1zM657 334h1v1h-1zM658 333h1v1h-1zM659 333h1v1h-1zM660 333h1v1h-1zM661 332h1v1h-1zM662 332h1v1h-1zM663 332h1v1h-1zM664 331h1v1h-1zM665 331h1v1h-1zM666 331h1v1h-1zM667 331h1v1h-1zM668 330h1v1h-1zM669 330h1v1h-1zM670 330h1v1h-1zM671 330h1v1h-1zM672 330h1v1h-1zM673 329h1v1h-1zM674 329h1v1h-1zM675 329h1v1h-1zM676 329h1v1h-1zM677 329h1v1h-1zM678 329h1v1h-1zM679 329h1v1h-1zM680 329h1v1h-1zM681 329h1v1h-1zM682 329h1v1h-1zM683 329h1v1h-1zM684 329h1v1h-1zM685 329h1v1h-1zM686 329h1v1h-1zM687 329h1v1h-1zM688 329h1v1h-1zM689 329h1v1h-1zM690 329h1v1h-1zM691 329h1v1h-1zM692 329h1v1h-1zM693 329h1v1h-1zM694 329h1v1h-1zM695 329h1v1h-1zM696 330h1v1h-1zM697 330h1v1h-1zM698 330h1v1h-1zM699 330h1v1h-1zM700 331h1v1h-1zM701 331h1v1h-1zM702 331h1v1h-1zM703 331h1v1h-1zM704 332h1v1h-1zM705 332h1v1h-1zM706 333h1v1h-1zM707 333h1v1h-1zM708 333h1v1h-1zM709 334h1v1h-1zM710 334h1v1h-1zM711 335h1v1h-1zM712 335h1v1h-1zM713 336h1v1h-1zM714 336h1v1h-1zM715 337h1v1h-1zM716 337h1v1h-1zM717 338h1v1h-1zM718 338h1v1h-1zM719 339h1v1h-1zM720 340h1v1h-1zM721 340h1v1h-1zM722 341h1v1h-1zM723 342h1v1h-1zM724 342h1v1h-1zM725 343h1v1h-1zM726 344h1v1h-1zM727 345h1v1h-1zM728 345h1v1h-1zM729 346h1v1h-1zM730 347h1v1h-1zM731 348h1v1h-1zM732 349h1v1h-1zM733 349h1v1h-1zM734 350h1v1h-1zM735 351h1v1h-1zM736 352h1v1h-1zM737 353h1v1h-1zM738 354h1v1h-1zM739 355h1v1h-1zM740 356h1v1h-1zM741 357h1v1h-1zM742 358h1v1h-1zM743 359h1v1h-1zM744 360h1v1h-1zM745 361h1v1h-1zM746 362h1v1h-1zM747 363h1v1h-1zM748 364h1v1h-1zM749 365h1v1h-1zM750 366h1v1h-1zM751 367h1v1h-1zM752 368h1v1h-1zM753 369h1v1h-1zM754 370h1v1h-1zM755 371h1v1h-1zM756 372h1v1h-1zM757 373h1v1h-1zM758 374h1v1h-1zM759 375h1v1h-1zM760 376h1v1h-1zM761 377h1v1h-1zM762 378h1v2h-1zM763 380h1v1h-1zM764 381h1v1h-1zM765 382h1v1h-1zM766 383h1v1h-1zM767 384h1v1h-1zM768 385h1v1h-1zM769 386h1v1h-1zM770 387h1v2h-1zM771 389h1v1h-1zM772 390h1v1h-1zM773 391h1v1h-1zM774 392h1v1h-1zM775 393h1v1h-1zM776 394h1v2h-1zM777 396h1v1h-1zM778 397h1v1h-1zM779 398h1v1h-1zM780 399h1v1h-1zM781 400h1v1h-1zM782 401h1v1h-1zM783 402h1v2h-1zM784 404h1v1h-1zM785 405h1v1h-1zM786 406h1v1h-1zM787 407h1v1h-1zM788 408h1v1h-1zM789 409h1v1h-1zM790 410h1v1h-1zM791 411h1v2h-1zM792 413h1v1h-1zM793 414h1v1h-1zM794 415h1v1h-1zM795 416h1v1h-1zM796 417h1v1h-1zM797 418h1v1h-1zM798 419h1v1h-1zM799 420h1v2h-1zM800 422h1v1h-1zM801 423h1v1h-1zM802 424h1v1h-1zM803 425h1v1h-1zM804 426h1v1h-1zM805 427h1v1h-1zM806 428h1v1h-1zM807 429h1v1h-1zM808 430h1v1h-1zM809 431h1v1h-1zM810 432h1v1h-1zM811 433h1v2h-1zM812 435h1v1h-1zM813 436h1v1h-1zM814 437h1v1h-1zM815 438h1v1h-1zM816 439h1v1h-1zM817 440h1v1h-1zM818 441h1v1h-1zM819 442h1v1h-1zM820 443h1v1h-1zM821 444h1v1h-1zM822 445h1v1h-1zM823 446h1v1h-1zM824 447h1v1h-1zM825 448h1v1h-1zM826 449h1v1h-1zM827 450h1v1h-1zM828 451h1v1h-1zM829 452h1v1h-1zM830 453h1v1h-1zM831 454h1v1h-1zM832 455h1v1h-1zM833 456h1v1h-1zM834 457h1v1h-1zM835 458h1v1h-1zM836 458h1v1h-1zM837 459h1v1h-1zM838 460h1v1h-1zM839 461h1v1h-1zM840 462h1v1h-1zM841 463h1v1h-1zM842 464h1v1h-1zM843 465h1v1h-1zM844 466h1v1h-1zM845 466h1v1h-1zM846 467h1v1h-1zM847 468h1v1h-1zM848 469h1v1h-1zM849 470h1v1h-1zM850 471h1v1h-1zM851 471h1v1h-1zM852 472h1v1h-1zM853 473h1v1h-1zM854 474h1v1h-1zM855 475h1v1h-1zM856 475h1v1h-1zM857 476h1v1h-1zM858 477h1v1h-1zM859 478h1v1h-1zM860 478h1v1h-1zM861 479h1v1h-1zM862 480h1v1h-1zM863 481h1v1h-1zM864 481h1v1h-1zM865 482h1v1h-1zM866 483h1v1h-1zM867 483h1v1h-1zM868 484h1v1h-1zM869 485h1v1h-1zM870 485h1v1h-1zM871 486h1v1h-1zM872 486h1v1h-1zM873 487h1v1h-1zM874 488h1v1h-1zM875 488h1v1h-1zM876 489h1v1h-1z"/><polygon fill="#ff0000" points="260.75,241.00 265.75,241.00 265.75,252.00 271.50,247.00 271.50,253.00 263.25,260.50 255.00,253.00 255.00,247.00 260.75,252.00"/><polygon fill="#ff0000" points="745.00,174.00 750.00,174.00 750.00,185.00 755.75,180.00 755.75,186.00 747.50,193.50 739.25,186.00 739.25,180.00 745.00,185.00"/><polygon fill="#00ff00" points="625.20,401.50 630.20,401.50 630.20,390.50 635.95,395.50 635.95,389.50 627.70,382.00 619.45,389.50 619.45,395.50 625.20,390.50"/><polygon fill="#00ff00" points="845.30,463.00 850.30,463.00 850.30,452.00 856.05,457.00 856.05,451.00 847.80,443.50 839.55,451.00 839.55,457.00 845.30,452.00"/><rect x="0" y="114" width="1092" height="1" fill="#fff"/><rect x="1091" y="114" width="1" height="409" fill="#fff"/><rect x="0" y="522" width="1092" height="1" fill="#fff"/><rect x="0" y="524" width="1092" height="1" fill="#fff"/><rect x="1091" y="524" width="1" height="119" fill="#fff"/><rect x="0" y="642" width="1092" height="1" fill="#fff"/><polygon points="875,115 890.5,115 882.7,123" fill="#8fa1b5"/><polygon points="0,634 0,642 8,642" fill="#8fa1b5"/><rect x="1092" y="163" width="3" height="1" fill="#fff"/><text x="1099.40" y="168" font-size="14" fill="#fff" font-weight="normal" textLength="50.10" lengthAdjust="spacingAndGlyphs">106.990</text><rect x="1092" y="228" width="3" height="1" fill="#fff"/><text x="1099.40" y="233" font-size="14" fill="#fff" font-weight="normal" textLength="50.10" lengthAdjust="spacingAndGlyphs">106.615</text><rect x="1092" y="292" width="3" height="1" fill="#fff"/><text x="1099.40" y="297" font-size="14" fill="#fff" font-weight="normal" textLength="50.10" lengthAdjust="spacingAndGlyphs">106.240</text><rect x="1092" y="357" width="3" height="1" fill="#fff"/><text x="1099.40" y="362" font-size="14" fill="#fff" font-weight="normal" textLength="50.10" lengthAdjust="spacingAndGlyphs">105.870</text><rect x="1092" y="422" width="3" height="1" fill="#fff"/><text x="1099.40" y="427" font-size="14" fill="#fff" font-weight="normal" textLength="50.10" lengthAdjust="spacingAndGlyphs">105.495</text><rect x="1092" y="487" width="3" height="1" fill="#fff"/><text x="1099.40" y="492" font-size="14" fill="#fff" font-weight="normal" textLength="50.10" lengthAdjust="spacingAndGlyphs">105.120</text><rect x="1093" y="440" width="62" height="17" fill="#fff"/><text x="1098.80" y="454" font-size="14" fill="#000" font-weight="normal" textLength="50.30" lengthAdjust="spacingAndGlyphs">105.346</text><rect x="1092" y="526" width="3" height="1" fill="#fff"/><rect x="1092" y="583" width="3" height="1" fill="#fff"/><rect x="1092" y="642" width="3" height="1" fill="#fff"/><text x="1095.60" y="540" font-size="14" fill="#fff" font-weight="normal" textLength="42.42" lengthAdjust="spacingAndGlyphs">1.1831</text><text x="1095.60" y="589" font-size="14" fill="#fff" font-weight="normal" textLength="26.95" lengthAdjust="spacingAndGlyphs">0.00</text><text x="1095.60" y="638" font-size="14" fill="#fff" font-weight="normal" textLength="47.78" lengthAdjust="spacingAndGlyphs">-1.2198</text><rect x="0" y="643" width="1" height="3" fill="#fff"/><text x="0.50" y="660" font-size="14" fill="#fff" font-weight="normal" >24 Aug 2020</text><rect x="128" y="643" width="1" height="3" fill="#fff"/><text x="127.30" y="660" font-size="14" fill="#fff" font-weight="normal" textLength="84.22" lengthAdjust="spacingAndGlyphs">25 Aug 02:00</text><rect x="256" y="643" width="1" height="3" fill="#fff"/><text x="255.30" y="660" font-size="14" fill="#fff" font-weight="normal" textLength="84.22" lengthAdjust="spacingAndGlyphs">25 Aug 18:00</text><rect x="384" y="643" width="1" height="3" fill="#fff"/><text x="383.30" y="660" font-size="14" fill="#fff" font-weight="normal" textLength="84.22" lengthAdjust="spacingAndGlyphs">26 Aug 10:00</text><rect x="512" y="643" width="1" height="3" fill="#fff"/><text x="511.30" y="660" font-size="14" fill="#fff" font-weight="normal" textLength="84.22" lengthAdjust="spacingAndGlyphs">27 Aug 02:00</text><rect x="640" y="643" width="1" height="3" fill="#fff"/><text x="639.30" y="660" font-size="14" fill="#fff" font-weight="normal" textLength="84.22" lengthAdjust="spacingAndGlyphs">27 Aug 18:00</text><rect x="768" y="643" width="1" height="3" fill="#fff"/><text x="767.30" y="660" font-size="14" fill="#fff" font-weight="normal" textLength="84.22" lengthAdjust="spacingAndGlyphs">28 Aug 10:00</text><path fill="#ffff00" d="M0 564h1v1h-1zM1 564h1v1h-1zM2 564h1v1h-1zM3 564h1v1h-1zM4 564h1v1h-1zM5 564h1v1h-1zM6 564h1v1h-1zM7 564h1v1h-1zM8 564h1v1h-1zM9 564h1v1h-1zM10 564h1v1h-1zM11 564h1v1h-1zM12 564h1v1h-1zM13 564h1v1h-1zM14 564h1v1h-1zM15 564h1v1h-1zM16 564h1v1h-1zM17 564h1v1h-1zM18 564h1v1h-1zM19 564h1v1h-1zM20 564h1v1h-1zM21 564h1v1h-1zM22 564h1v1h-1zM23 564h1v1h-1zM24 564h1v1h-1zM25 564h1v1h-1zM26 565h1v1h-1zM27 565h1v1h-1zM28 565h1v1h-1zM29 565h1v1h-1zM30 565h1v1h-1zM31 565h1v1h-1zM32 565h1v1h-1zM33 565h1v1h-1zM34 565h1v1h-1zM35 566h1v1h-1zM36 566h1v1h-1zM37 566h1v1h-1zM38 566h1v1h-1zM39 566h1v1h-1zM40 566h1v1h-1zM41 566h1v1h-1zM42 567h1v1h-1zM43 567h1v1h-1zM44 567h1v1h-1zM45 567h1v1h-1zM46 567h1v1h-1zM47 567h1v1h-1zM48 568h1v1h-1zM49 568h1v1h-1zM50 568h1v1h-1zM51 568h1v1h-1zM52 568h1v1h-1zM53 568h1v1h-1zM54 568h1v1h-1zM55 568h1v1h-1zM56 569h1v1h-1zM57 569h1v1h-1zM58 569h1v1h-1zM59 569h1v1h-1zM60 569h1v1h-1zM61 569h1v1h-1zM62 569h1v1h-1zM63 569h1v1h-1zM64 569h1v1h-1zM65 569h1v1h-1zM66 569h1v1h-1zM67 569h1v1h-1zM68 569h1v1h-1zM69 569h1v1h-1zM70 569h1v1h-1zM71 569h1v1h-1zM72 569h1v1h-1zM73 569h1v1h-1zM74 569h1v1h-1zM75 569h1v1h-1zM76 568h1v1h-1zM77 568h1v1h-1zM78 568h1v1h-1zM79 568h1v1h-1zM80 568h1v1h-1zM81 568h1v1h-1zM82 567h1v1h-1zM83 567h1v1h-1zM84 567h1v1h-1zM85 567h1v1h-1zM86 567h1v1h-1zM87 567h1v1h-1zM88 566h1v1h-1zM89 566h1v1h-1zM90 566h1v1h-1zM91 566h1v1h-1zM92 566h1v1h-1zM93 566h1v1h-1zM94 565h1v1h-1zM95 565h1v1h-1zM96 565h1v1h-1zM97 565h1v1h-1zM98 565h1v1h-1zM99 565h1v1h-1zM100 565h1v1h-1zM101 564h1v1h-1zM102 564h1v1h-1zM103 564h1v1h-1zM104 564h1v1h-1zM105 564h1v1h-1zM106 564h1v1h-1zM107 563h1v1h-1zM108 563h1v1h-1zM109 563h1v1h-1zM110 563h1v1h-1zM111 563h1v1h-1zM112 562h1v1h-1zM113 562h1v1h-1zM114 562h1v1h-1zM115 562h1v1h-1zM116 562h1v1h-1zM117 561h1v1h-1zM118 561h1v1h-1zM119 561h1v1h-1zM120 560h1v1h-1zM121 560h1v1h-1zM122 560h1v1h-1zM123 560h1v1h-1zM124 559h1v1h-1zM125 559h1v1h-1zM126 559h1v1h-1zM127 558h1v1h-1zM128 558h1v1h-1zM129 558h1v1h-1zM130 557h1v1h-1zM131 557h1v1h-1zM132 557h1v1h-1zM133 556h1v1h-1zM134 556h1v1h-1zM135 556h1v1h-1zM136 555h1v1h-1zM137 555h1v1h-1zM138 555h1v1h-1zM139 555h1v1h-1zM140 554h1v1h-1zM141 554h1v1h-1zM142 554h1v1h-1zM143 554h1v1h-1zM144 553h1v1h-1zM145 553h1v1h-1zM146 553h1v1h-1zM147 553h1v1h-1zM148 553h1v1h-1zM149 552h1v1h-1zM150 552h1v1h-1zM151 552h1v1h-1zM152 552h1v1h-1zM153 552h1v1h-1zM154 552h1v1h-1zM155 552h1v1h-1zM156 551h1v1h-1zM157 551h1v1h-1zM158 551h1v1h-1zM159 551h1v1h-1zM160 551h1v1h-1zM161 551h1v1h-1zM162 551h1v1h-1zM163 550h1v1h-1zM164 550h1v1h-1zM165 550h1v1h-1zM166 550h1v1h-1zM167 550h1v1h-1zM168 550h1v1h-1zM169 550h1v1h-1zM170 550h1v1h-1zM171 549h1v1h-1zM172 549h1v1h-1zM173 549h1v1h-1zM174 549h1v1h-1zM175 549h1v1h-1zM176 549h1v1h-1zM177 549h1v1h-1zM178 548h1v1h-1zM179 548h1v1h-1zM180 548h1v1h-1zM181 548h1v1h-1zM182 548h1v1h-1zM183 548h1v1h-1zM184 548h1v1h-1zM185 547h1v1h-1zM186 547h1v1h-1zM187 547h1v1h-1zM188 547h1v1h-1zM189 547h1v1h-1zM190 547h1v1h-1zM191 546h1v1h-1zM192 546h1v1h-1zM193 546h1v1h-1zM194 546h1v1h-1zM195 546h1v1h-1zM196 546h1v1h-1zM197 545h1v1h-1zM198 545h1v1h-1zM199 545h1v1h-1zM200 545h1v1h-1zM201 545h1v1h-1zM202 545h1v1h-1zM203 544h1v1h-1zM204 544h1v1h-1zM205 544h1v1h-1zM206 544h1v1h-1zM207 544h1v1h-1zM208 544h1v1h-1zM209 543h1v1h-1zM210 543h1v1h-1zM211 543h1v1h-1zM212 543h1v1h-1zM213 543h1v1h-1zM214 543h1v1h-1zM215 542h1v1h-1zM216 542h1v1h-1zM217 542h1v1h-1zM218 542h1v1h-1zM219 542h1v1h-1zM220 542h1v1h-1zM221 541h1v1h-1zM222 541h1v1h-1zM223 541h1v1h-1zM224 541h1v1h-1zM225 541h1v1h-1zM226 540h1v1h-1zM227 540h1v1h-1zM228 540h1v1h-1zM229 540h1v1h-1zM230 540h1v1h-1zM231 540h1v1h-1zM232 540h1v1h-1zM233 539h1v1h-1zM234 539h1v1h-1zM235 539h1v1h-1zM236 539h1v1h-1zM237 539h1v1h-1zM238 539h1v1h-1zM239 539h1v1h-1zM240 538h1v1h-1zM241 538h1v1h-1zM242 538h1v1h-1zM243 538h1v1h-1zM244 538h1v1h-1zM245 538h1v1h-1zM246 538h1v1h-1zM247 538h1v1h-1zM248 538h1v1h-1zM249 537h1v1h-1zM250 537h1v1h-1zM251 537h1v1h-1zM252 537h1v1h-1zM253 537h1v1h-1zM254 537h1v1h-1zM255 537h1v1h-1zM256 537h1v1h-1zM257 537h1v1h-1zM258 537h1v1h-1zM259 537h1v1h-1zM260 537h1v1h-1zM261 537h1v1h-1zM262 537h1v1h-1zM263 537h1v1h-1zM264 537h1v1h-1zM265 537h1v1h-1zM266 537h1v1h-1zM267 537h1v1h-1zM268 537h1v1h-1zM269 537h1v1h-1zM270 537h1v1h-1zM271 537h1v1h-1zM272 537h1v1h-1zM273 537h1v1h-1zM274 537h1v1h-1zM275 537h1v1h-1zM276 537h1v1h-1zM277 537h1v1h-1zM278 537h1v1h-1zM279 537h1v1h-1zM280 537h1v1h-1zM281 537h1v1h-1zM282 538h1v1h-1zM283 538h1v1h-1zM284 538h1v1h-1zM285 538h1v1h-1zM286 538h1v1h-1zM287 538h1v1h-1zM288 538h1v1h-1zM289 538h1v1h-1zM290 538h1v1h-1zM291 538h1v1h-1zM292 538h1v1h-1zM293 538h1v1h-1zM294 538h1v1h-1zM295 538h1v1h-1zM296 538h1v1h-1zM297 538h1v1h-1zM298 538h1v1h-1zM299 538h1v1h-1zM300 539h1v1h-1zM301 539h1v1h-1zM302 539h1v1h-1zM303 539h1v1h-1zM304 539h1v1h-1zM305 539h1v1h-1zM306 539h1v1h-1zM307 539h1v1h-1zM308 539h1v1h-1zM309 539h1v1h-1zM310 539h1v1h-1zM311 539h1v1h-1zM312 539h1v1h-1zM313 539h1v1h-1zM314 539h1v1h-1zM315 539h1v1h-1zM316 539h1v1h-1zM317 540h1v1h-1zM318 540h1v1h-1zM319 540h1v1h-1zM320 540h1v1h-1zM321 540h1v1h-1zM322 540h1v1h-1zM323 540h1v1h-1zM324 540h1v1h-1zM325 540h1v1h-1zM326 540h1v1h-1zM327 540h1v1h-1zM328 540h1v1h-1zM329 540h1v1h-1zM330 540h1v1h-1zM331 540h1v1h-1zM332 540h1v1h-1zM333 540h1v1h-1zM334 540h1v1h-1zM335 540h1v1h-1zM336 540h1v1h-1zM337 541h1v1h-1zM338 541h1v1h-1zM339 541h1v1h-1zM340 541h1v1h-1zM341 541h1v1h-1zM342 541h1v1h-1zM343 541h1v1h-1zM344 541h1v1h-1zM345 541h1v1h-1zM346 541h1v1h-1zM347 541h1v1h-1zM348 541h1v1h-1zM349 541h1v1h-1zM350 541h1v1h-1zM351 541h1v1h-1zM352 541h1v1h-1zM353 541h1v1h-1zM354 541h1v1h-1zM355 541h1v1h-1zM356 541h1v1h-1zM357 541h1v1h-1zM358 541h1v1h-1zM359 541h1v1h-1zM360 541h1v1h-1zM361 541h1v1h-1zM362 541h1v1h-1zM363 542h1v1h-1zM364 542h1v1h-1zM365 542h1v1h-1zM366 542h1v1h-1zM367 542h1v1h-1zM368 542h1v1h-1zM369 542h1v1h-1zM370 542h1v1h-1zM371 542h1v1h-1zM372 543h1v1h-1zM373 543h1v1h-1zM374 543h1v1h-1zM375 543h1v1h-1zM376 543h1v1h-1zM377 543h1v1h-1zM378 544h1v1h-1zM379 544h1v1h-1zM380 544h1v1h-1zM381 544h1v1h-1zM382 544h1v1h-1zM383 545h1v1h-1zM384 545h1v1h-1zM385 545h1v1h-1zM386 545h1v1h-1zM387 546h1v1h-1zM388 546h1v1h-1zM389 546h1v1h-1zM390 546h1v1h-1zM391 547h1v1h-1zM392 547h1v1h-1zM393 547h1v1h-1zM394 547h1v1h-1zM395 548h1v1h-1zM396 548h1v1h-1zM397 548h1v1h-1zM398 548h1v1h-1zM399 549h1v1h-1zM400 549h1v1h-1zM401 549h1v1h-1zM402 550h1v1h-1zM403 550h1v1h-1zM404 550h1v1h-1zM405 551h1v1h-1zM406 551h1v1h-1zM407 551h1v1h-1zM408 552h1v1h-1zM409 552h1v1h-1zM410 552h1v1h-1zM411 553h1v1h-1zM412 553h1v1h-1zM413 554h1v1h-1zM414 554h1v1h-1zM415 554h1v1h-1zM416 555h1v1h-1zM417 555h1v1h-1zM418 556h1v1h-1zM419 556h1v1h-1zM420 556h1v1h-1zM421 557h1v1h-1zM422 557h1v1h-1zM423 558h1v1h-1zM424 558h1v1h-1zM425 559h1v1h-1zM426 559h1v1h-1zM427 560h1v1h-1zM428 560h1v1h-1zM429 561h1v1h-1zM430 562h1v1h-1zM431 562h1v1h-1zM432 563h1v1h-1zM433 563h1v1h-1zM434 564h1v1h-1zM435 564h1v1h-1zM436 565h1v1h-1zM437 566h1v1h-1zM438 566h1v1h-1zM439 567h1v1h-1zM440 567h1v1h-1zM441 568h1v1h-1zM442 569h1v1h-1zM443 569h1v1h-1zM444 570h1v1h-1zM445 570h1v1h-1zM446 571h1v1h-1zM447 571h1v1h-1zM448 572h1v1h-1zM449 573h1v1h-1zM450 573h1v1h-1zM451 574h1v1h-1zM452 575h1v1h-1zM453 575h1v1h-1zM454 576h1v1h-1zM455 576h1v1h-1zM456 577h1v1h-1zM457 578h1v1h-1zM458 578h1v1h-1zM459 579h1v1h-1zM460 580h1v1h-1zM461 580h1v1h-1zM462 581h1v1h-1zM463 581h1v1h-1zM464 582h1v1h-1zM465 583h1v1h-1zM466 583h1v1h-1zM467 584h1v1h-1zM468 585h1v1h-1zM469 585h1v1h-1zM470 586h1v1h-1zM471 587h1v1h-1zM472 588h1v1h-1zM473 588h1v1h-1zM474 589h1v1h-1zM475 590h1v1h-1zM476 590h1v1h-1zM477 591h1v1h-1zM478 592h1v1h-1zM479 593h1v1h-1zM480 593h1v1h-1zM481 594h1v1h-1zM482 595h1v1h-1zM483 595h1v1h-1zM484 596h1v1h-1zM485 597h1v1h-1zM486 597h1v1h-1zM487 598h1v1h-1zM488 599h1v1h-1zM489 599h1v1h-1zM490 600h1v1h-1zM491 600h1v1h-1zM492 601h1v1h-1zM493 602h1v1h-1zM494 602h1v1h-1zM495 603h1v1h-1zM496 603h1v1h-1zM497 604h1v1h-1zM498 604h1v1h-1zM499 605h1v1h-1zM500 606h1v1h-1zM501 606h1v1h-1zM502 607h1v1h-1zM503 607h1v1h-1zM504 608h1v1h-1zM505 608h1v1h-1zM506 609h1v1h-1zM507 609h1v1h-1zM508 610h1v1h-1zM509 610h1v1h-1zM510 611h1v1h-1zM511 611h1v1h-1zM512 611h1v1h-1zM513 612h1v1h-1zM514 612h1v1h-1zM515 613h1v1h-1zM516 613h1v1h-1zM517 614h1v1h-1zM518 614h1v1h-1zM519 614h1v1h-1zM520 615h1v1h-1zM521 615h1v1h-1zM522 615h1v1h-1zM523 616h1v1h-1zM524 616h1v1h-1zM525 616h1v1h-1zM526 617h1v1h-1zM527 617h1v1h-1zM528 617h1v1h-1zM529 618h1v1h-1zM530 618h1v1h-1zM531 618h1v1h-1zM532 619h1v1h-1zM533 619h1v1h-1zM534 619h1v1h-1zM535 619h1v1h-1zM536 620h1v1h-1zM537 620h1v1h-1zM538 620h1v1h-1zM539 620h1v1h-1zM540 621h1v1h-1zM541 621h1v1h-1zM542 621h1v1h-1zM543 621h1v1h-1zM544 621h1v1h-1zM545 622h1v1h-1zM546 622h1v1h-1zM547 622h1v1h-1zM548 622h1v1h-1zM549 622h1v1h-1zM550 622h1v1h-1zM551 622h1v1h-1zM552 623h1v1h-1zM553 623h1v1h-1zM554 623h1v1h-1zM555 623h1v1h-1zM556 623h1v1h-1zM557 623h1v1h-1zM558 623h1v1h-1zM559 623h1v1h-1zM560 623h1v1h-1zM561 623h1v1h-1zM562 624h1v1h-1zM563 624h1v1h-1zM564 624h1v1h-1zM565 624h1v1h-1zM566 624h1v1h-1zM567 624h1v1h-1zM568 624h1v1h-1zM569 624h1v1h-1zM570 624h1v1h-1zM571 624h1v1h-1zM572 624h1v1h-1zM573 624h1v1h-1zM574 624h1v1h-1zM575 624h1v1h-1zM576 624h1v1h-1zM577 624h1v1h-1zM578 624h1v1h-1zM579 624h1v1h-1zM580 624h1v1h-1zM581 623h1v1h-1zM582 623h1v1h-1zM583 623h1v1h-1zM584 623h1v1h-1zM585 623h1v1h-1zM586 623h1v1h-1zM587 623h1v1h-1zM588 623h1v1h-1zM589 623h1v1h-1zM590 622h1v1h-1zM591 622h1v1h-1zM592 622h1v1h-1zM593 622h1v1h-1zM594 622h1v1h-1zM595 622h1v1h-1zM596 622h1v1h-1zM597 622h1v1h-1zM598 621h1v1h-1zM599 621h1v1h-1zM600 621h1v1h-1zM601 621h1v1h-1zM602 621h1v1h-1zM603 621h1v1h-1zM604 621h1v1h-1zM605 620h1v1h-1zM606 620h1v1h-1zM607 620h1v1h-1zM608 620h1v1h-1zM609 620h1v1h-1zM610 619h1v1h-1zM611 619h1v1h-1zM612 619h1v1h-1zM613 619h1v1h-1zM614 618h1v1h-1zM615 618h1v1h-1zM616 618h1v1h-1zM617 618h1v1h-1zM618 617h1v1h-1zM619 617h1v1h-1zM620 617h1v1h-1zM621 616h1v1h-1zM622 616h1v1h-1zM623 616h1v1h-1zM624 615h1v1h-1zM625 615h1v1h-1zM626 614h1v1h-1zM627 614h1v1h-1zM628 613h1v1h-1zM629 613h1v1h-1zM630 612h1v1h-1zM631 612h1v1h-1zM632 611h1v1h-1zM633 610h1v1h-1zM634 610h1v1h-1zM635 609h1v1h-1zM636 609h1v1h-1zM637 608h1v1h-1zM638 607h1v1h-1zM639 607h1v1h-1zM640 606h1v1h-1zM641 605h1v1h-1zM642 605h1v1h-1zM643 604h1v1h-1zM644 603h1v1h-1zM645 603h1v1h-1zM646 602h1v1h-1zM647 601h1v1h-1zM648 600h1v1h-1zM649 600h1v1h-1zM650 599h1v1h-1zM651 598h1v1h-1zM652 597h1v1h-1zM653 597h1v1h-1zM654 596h1v1h-1zM655 595h1v1h-1zM656 594h1v1h-1zM657 593h1v1h-1zM658 592h1v1h-1zM659 591h1v1h-1zM660 591h1v1h-1zM661 590h1v1h-1zM662 589h1v1h-1zM663 588h1v1h-1zM664 587h1v1h-1zM665 586h1v1h-1zM666 586h1v1h-1zM667 585h1v1h-1zM668 584h1v1h-1zM669 583h1v1h-1zM670 583h1v1h-1zM671 582h1v1h-1zM672 581h1v1h-1zM673 580h1v1h-1zM674 580h1v1h-1zM675 579h1v1h-1zM676 578h1v1h-1zM677 578h1v1h-1zM678 577h1v1h-1zM679 576h1v1h-1zM680 575h1v1h-1zM681 575h1v1h-1zM682 574h1v1h-1zM683 573h1v1h-1zM684 573h1v1h-1zM685 572h1v1h-1zM686 572h1v1h-1zM687 571h1v1h-1zM688 570h1v1h-1zM689 570h1v1h-1zM690 569h1v1h-1zM691 568h1v1h-1zM692 568h1v1h-1zM693 567h1v1h-1zM694 567h1v1h-1zM695 566h1v1h-1zM696 566h1v1h-1zM697 565h1v1h-1zM698 564h1v1h-1zM699 564h1v1h-1zM700 563h1v1h-1zM701 563h1v1h-1zM702 562h1v1h-1zM703 562h1v1h-1zM704 562h1v1h-1zM705 561h1v1h-1zM706 561h1v1h-1zM707 560h1v1h-1zM708 560h1v1h-1zM709 559h1v1h-1zM710 559h1v1h-1zM711 558h1v1h-1zM712 558h1v1h-1zM713 558h1v1h-1zM714 557h1v1h-1zM715 557h1v1h-1zM716 556h1v1h-1zM717 556h1v1h-1zM718 556h1v1h-1zM719 555h1v1h-1zM720 555h1v1h-1zM721 554h1v1h-1zM722 554h1v1h-1zM723 553h1v1h-1zM724 553h1v1h-1zM725 553h1v1h-1zM726 552h1v1h-1zM727 552h1v1h-1zM728 551h1v1h-1zM729 551h1v1h-1zM730 550h1v1h-1zM731 550h1v1h-1zM732 549h1v1h-1zM733 549h1v1h-1zM734 548h1v1h-1zM735 548h1v1h-1zM736 547h1v1h-1zM737 547h1v1h-1zM738 547h1v1h-1zM739 546h1v1h-1zM740 546h1v1h-1zM741 546h1v1h-1zM742 545h1v1h-1zM743 545h1v1h-1zM744 545h1v1h-1zM745 545h1v1h-1zM746 544h1v1h-1zM747 544h1v1h-1zM748 544h1v1h-1zM749 544h1v1h-1zM750 544h1v1h-1zM751 544h1v1h-1zM752 543h1v1h-1zM753 543h1v1h-1zM754 543h1v1h-1zM755 543h1v1h-1zM756 543h1v1h-1zM757 543h1v1h-1zM758 543h1v1h-1zM759 543h1v1h-1zM760 543h1v1h-1zM761 544h1v1h-1zM762 544h1v1h-1zM763 544h1v1h-1zM764 544h1v1h-1zM765 544h1v1h-1zM766 544h1v1h-1zM767 545h1v1h-1zM768 545h1v1h-1zM769 545h1v1h-1zM770 546h1v1h-1zM771 546h1v1h-1zM772 546h1v1h-1zM773 547h1v1h-1zM774 547h1v1h-1zM775 548h1v1h-1zM776 548h1v1h-1zM777 549h1v1h-1zM778 549h1v1h-1zM779 550h1v1h-1zM780 550h1v1h-1zM781 551h1v1h-1zM782 552h1v1h-1zM783 552h1v1h-1zM784 553h1v1h-1zM785 554h1v1h-1zM786 555h1v1h-1zM787 555h1v1h-1zM788 556h1v1h-1zM789 557h1v1h-1zM790 558h1v1h-1zM791 558h1v1h-1zM792 559h1v1h-1zM793 560h1v1h-1zM794 561h1v1h-1zM795 561h1v1h-1zM796 562h1v1h-1zM797 563h1v1h-1zM798 564h1v1h-1zM799 565h1v1h-1zM800 565h1v1h-1zM801 566h1v1h-1zM802 567h1v1h-1zM803 568h1v1h-1zM804 568h1v1h-1zM805 569h1v1h-1zM806 570h1v1h-1zM807 571h1v1h-1zM808 572h1v1h-1zM809 572h1v1h-1zM810 573h1v1h-1zM811 574h1v1h-1zM812 575h1v1h-1zM813 576h1v1h-1zM814 576h1v1h-1zM815 577h1v1h-1zM816 578h1v1h-1zM817 579h1v1h-1zM818 579h1v1h-1zM819 580h1v1h-1zM820 581h1v1h-1zM821 582h1v1h-1zM822 582h1v1h-1zM823 583h1v1h-1zM824 584h1v1h-1zM825 585h1v1h-1zM826 585h1v1h-1zM827 586h1v1h-1zM828 587h1v1h-1zM829 587h1v1h-1zM830 588h1v1h-1zM831 589h1v1h-1zM832 589h1v1h-1zM833 590h1v1h-1zM834 591h1v1h-1zM835 591h1v1h-1zM836 592h1v1h-1zM837 593h1v1h-1zM838 593h1v1h-1zM839 594h1v1h-1zM840 595h1v1h-1zM841 595h1v1h-1zM842 596h1v1h-1zM843 596h1v1h-1zM844 597h1v1h-1zM845 598h1v1h-1zM846 598h1v1h-1zM847 599h1v1h-1zM848 599h1v1h-1zM849 600h1v1h-1zM850 601h1v1h-1zM851 601h1v1h-1zM852 602h1v1h-1zM853 602h1v1h-1zM854 603h1v1h-1zM855 603h1v1h-1zM856 604h1v1h-1zM857 605h1v1h-1zM858 605h1v1h-1zM859 606h1v1h-1zM860 606h1v1h-1zM861 607h1v1h-1zM862 607h1v1h-1zM863 608h1v1h-1zM864 608h1v1h-1zM865 609h1v1h-1zM866 609h1v1h-1zM867 610h1v1h-1zM868 610h1v1h-1zM869 611h1v1h-1zM870 611h1v1h-1zM871 612h1v1h-1zM872 612h1v1h-1zM873 613h1v1h-1zM874 613h1v1h-1zM875 614h1v1h-1zM876 614h1v1h-1z"/><path fill="#ff0000" d="M-1 582h3v3h-3zM0 582h3v3h-3zM1 582h3v3h-3zM2 582h3v3h-3zM3 582h3v3h-3zM4 582h3v3h-3zM5 582h3v3h-3zM6 582h3v3h-3zM7 582h3v3h-3zM8 582h3v3h-3zM9 582h3v3h-3zM10 582h3v3h-3zM11 582h3v3h-3zM12 582h3v3h-3zM13 582h3v3h-3zM14 582h3v3h-3zM15 582h3v3h-3zM16 583h3v3h-3zM17 583h3v3h-3zM18 584h3v3h-3zM19 584h3v3h-3zM20 584h3v3h-3zM21 584h3v3h-3zM22 583h3v3h-3zM23 583h3v3h-3zM24 582h3v3h-3zM25 582h3v3h-3zM26 582h3v3h-3zM27 582h3v3h-3zM28 582h3v3h-3zM29 582h3v3h-3zM30 582h3v3h-3zM31 582h3v3h-3zM32 582h3v3h-3zM33 582h3v3h-3zM34 582h3v3h-3zM35 582h3v3h-3zM36 582h3v3h-3zM37 582h3v3h-3zM38 582h3v3h-3zM39 582h3v3h-3zM40 582h3v3h-3zM41 582h3v3h-3zM42 582h3v3h-3zM43 582h3v3h-3zM44 582h3v3h-3zM45 582h3v3h-3zM46 582h3v3h-3zM47 582h3v3h-3zM48 582h3v3h-3zM49 582h3v3h-3zM50 582h3v3h-3zM51 582h3v3h-3zM52 582h3v3h-3zM53 582h3v3h-3zM54 582h3v3h-3zM55 582h3v3h-3zM56 582h3v3h-3zM57 582h3v3h-3zM58 582h3v3h-3zM59 582h3v3h-3zM60 582h3v3h-3zM61 582h3v3h-3zM62 582h3v3h-3zM63 582h3v3h-3zM64 582h3v3h-3zM65 582h3v3h-3zM66 582h3v3h-3zM67 582h3v3h-3zM68 582h3v3h-3zM69 582h3v3h-3zM70 582h3v3h-3zM71 582h3v3h-3zM72 582h3v3h-3zM73 582h3v3h-3zM74 582h3v3h-3zM75 582h3v3h-3zM76 582h3v3h-3zM77 582h3v3h-3zM78 582h3v3h-3zM79 582h3v3h-3zM80 582h3v3h-3zM81 582h3v3h-3zM82 582h3v3h-3zM83 582h3v3h-3zM84 582h3v3h-3zM85 582h3v3h-3zM86 582h3v3h-3zM87 582h3v3h-3zM88 582h3v3h-3zM89 582h3v3h-3zM90 582h3v3h-3zM91 582h3v3h-3zM92 582h3v3h-3zM93 582h3v3h-3zM94 582h3v3h-3zM95 582h3v3h-3zM96 582h3v3h-3zM97 582h3v3h-3zM98 582h3v3h-3zM99 582h3v3h-3zM100 582h3v3h-3zM101 582h3v3h-3zM102 582h3v3h-3zM103 582h3v3h-3zM104 582h3v3h-3zM105 582h3v3h-3zM106 582h3v3h-3zM107 582h3v3h-3zM108 582h3v3h-3zM109 582h3v3h-3zM110 582h3v3h-3zM111 582h3v3h-3zM112 582h3v3h-3zM113 582h3v3h-3zM114 582h3v3h-3zM115 582h3v3h-3zM116 582h3v3h-3zM117 582h3v3h-3zM118 582h3v3h-3zM119 582h3v3h-3zM120 582h3v3h-3zM121 582h3v3h-3zM122 582h3v3h-3zM123 582h3v3h-3zM124 582h3v3h-3zM125 582h3v3h-3zM126 582h3v3h-3zM127 582h3v3h-3zM128 582h3v3h-3zM129 582h3v3h-3zM130 582h3v3h-3zM131 582h3v3h-3zM132 582h3v3h-3zM133 582h3v3h-3zM134 582h3v3h-3zM135 582h3v3h-3zM136 582h3v3h-3zM137 582h3v3h-3zM138 582h3v3h-3zM139 582h3v3h-3zM140 582h3v3h-3zM141 582h3v3h-3zM142 582h3v3h-3zM143 582h3v3h-3zM144 582h3v3h-3zM145 582h3v3h-3zM146 582h3v3h-3zM147 582h3v3h-3zM148 582h3v3h-3zM149 582h3v3h-3zM150 582h3v3h-3zM151 582h3v3h-3zM152 582h3v3h-3zM153 582h3v3h-3zM154 582h3v3h-3zM155 582h3v3h-3zM156 582h3v3h-3zM157 582h3v3h-3zM158 582h3v3h-3zM159 582h3v3h-3zM160 582h3v3h-3zM161 582h3v3h-3zM162 582h3v3h-3zM163 582h3v3h-3zM164 582h3v3h-3zM165 582h3v3h-3zM166 582h3v3h-3zM167 582h3v3h-3zM168 582h3v3h-3zM169 582h3v3h-3zM170 582h3v3h-3zM171 582h3v3h-3zM172 582h3v3h-3zM173 582h3v3h-3zM174 582h3v3h-3zM175 582h3v3h-3zM176 582h3v3h-3zM177 582h3v3h-3zM178 582h3v3h-3zM179 582h3v3h-3zM180 582h3v3h-3zM181 582h3v3h-3zM182 582h3v3h-3zM183 582h3v3h-3zM184 582h3v3h-3zM185 582h3v3h-3zM186 582h3v3h-3zM187 582h3v3h-3zM188 582h3v3h-3zM189 582h3v3h-3zM190 582h3v3h-3zM191 582h3v3h-3zM192 582h3v3h-3zM193 582h3v3h-3zM194 582h3v3h-3zM195 582h3v3h-3zM196 582h3v3h-3zM197 582h3v3h-3zM198 582h3v3h-3zM199 582h3v3h-3zM200 582h3v3h-3zM201 582h3v3h-3zM202 582h3v3h-3zM203 582h3v3h-3zM204 582h3v3h-3zM205 582h3v3h-3zM206 582h3v3h-3zM207 582h3v3h-3zM208 582h3v3h-3zM209 582h3v3h-3zM210 582h3v3h-3zM211 582h3v3h-3zM212 582h3v3h-3zM213 582h3v3h-3zM214 582h3v3h-3zM215 582h3v3h-3zM216 582h3v3h-3zM217 582h3v3h-3zM218 582h3v3h-3zM219 582h3v3h-3zM220 582h3v3h-3zM221 582h3v3h-3zM222 582h3v3h-3zM223 582h3v3h-3zM224 582h3v3h-3zM225 582h3v3h-3zM226 582h3v3h-3zM227 582h3v3h-3zM228 582h3v3h-3zM229 582h3v3h-3zM230 582h3v3h-3zM231 582h3v3h-3zM232 582h3v3h-3zM233 582h3v3h-3zM234 582h3v3h-3zM235 582h3v3h-3zM236 582h3v3h-3zM237 582h3v3h-3zM238 582h3v3h-3zM239 582h3v3h-3zM240 582h3v3h-3zM241 582h3v3h-3zM242 582h3v3h-3zM243 582h3v3h-3zM244 582h3v3h-3zM245 582h3v3h-3zM246 582h3v3h-3zM247 582h3v3h-3zM248 582h3v3h-3zM249 582h3v3h-3zM250 582h3v3h-3zM251 582h3v3h-3zM252 582h3v3h-3zM253 582h3v3h-3zM254 582h3v3h-3zM255 582h3v3h-3zM256 582h3v3h-3zM257 582h3v3h-3zM258 582h3v3h-3zM259 582h3v3h-3zM260 582h3v3h-3zM261 582h3v3h-3zM262 582h3v3h-3zM263 582h3v3h-3zM264 582h3v3h-3zM265 582h3v3h-3zM266 582h3v3h-3zM267 582h3v3h-3zM268 582h3v3h-3zM269 582h3v3h-3zM270 582h3v3h-3zM271 582h3v3h-3zM272 582h3v3h-3zM273 582h3v3h-3zM274 582h3v3h-3zM275 582h3v3h-3zM276 582h3v3h-3zM277 582h3v3h-3zM278 582h3v3h-3zM279 582h3v3h-3zM280 582h3v3h-3zM281 582h3v3h-3zM282 582h3v3h-3zM283 582h3v3h-3zM284 582h3v3h-3zM285 582h3v3h-3zM286 582h3v3h-3zM287 582h3v3h-3zM288 582h3v3h-3zM289 582h3v3h-3zM290 582h3v3h-3zM291 582h3v3h-3zM292 582h3v3h-3zM293 582h3v3h-3zM294 582h3v3h-3zM295 582h3v3h-3zM296 582h3v3h-3zM297 582h3v3h-3zM298 582h3v3h-3zM299 582h3v3h-3zM300 582h3v3h-3zM301 582h3v3h-3zM302 582h3v3h-3zM303 582h3v3h-3zM304 582h3v3h-3zM305 582h3v3h-3zM306 582h3v3h-3zM307 582h3v3h-3zM308 582h3v3h-3zM309 582h3v3h-3zM310 582h3v3h-3zM311 582h3v3h-3zM312 582h3v3h-3zM313 582h3v3h-3zM314 582h3v3h-3zM315 582h3v3h-3zM316 582h3v3h-3zM317 582h3v3h-3zM318 582h3v3h-3zM319 582h3v3h-3zM320 582h3v3h-3zM321 582h3v3h-3zM322 582h3v3h-3zM323 582h3v3h-3zM324 582h3v3h-3zM325 582h3v3h-3zM326 582h3v3h-3zM327 582h3v3h-3zM328 582h3v3h-3zM329 582h3v3h-3zM330 582h3v3h-3zM331 582h3v3h-3zM332 582h3v3h-3zM333 582h3v3h-3zM334 582h3v3h-3zM335 582h3v3h-3zM336 582h3v3h-3zM337 582h3v3h-3zM338 582h3v3h-3zM339 582h3v3h-3zM340 582h3v3h-3zM341 582h3v3h-3zM342 582h3v3h-3zM343 582h3v3h-3zM344 582h3v3h-3zM345 582h3v3h-3zM346 582h3v3h-3zM347 582h3v3h-3zM348 582h3v3h-3zM349 582h3v3h-3zM350 582h3v3h-3zM351 582h3v3h-3zM352 582h3v3h-3zM353 582h3v3h-3zM354 582h3v3h-3zM355 582h3v3h-3zM356 582h3v3h-3zM357 582h3v3h-3zM358 582h3v3h-3zM359 582h3v3h-3zM360 582h3v3h-3zM361 582h3v3h-3zM362 582h3v3h-3zM363 582h3v3h-3zM364 582h3v3h-3zM365 582h3v3h-3zM366 582h3v3h-3zM367 582h3v3h-3zM368 582h3v3h-3zM369 582h3v3h-3zM370 582h3v3h-3zM371 582h3v3h-3zM372 582h3v3h-3zM373 582h3v3h-3zM374 582h3v3h-3zM375 582h3v3h-3zM376 582h3v3h-3zM377 582h3v3h-3zM378 582h3v3h-3zM379 582h3v3h-3zM380 582h3v3h-3zM381 582h3v3h-3zM382 582h3v3h-3zM383 582h3v3h-3zM384 582h3v3h-3zM385 582h3v3h-3zM386 582h3v3h-3zM387 582h3v3h-3zM388 582h3v3h-3zM389 583h3v3h-3zM390 584h3v3h-3zM391 584h3v3h-3zM392 585h3v3h-3zM393 585h3v3h-3zM394 585h3v3h-3zM395 586h3v3h-3zM396 586h3v3h-3zM397 587h3v3h-3zM398 587h3v3h-3zM399 587h3v3h-3zM400 587h3v3h-3zM401 588h3v3h-3zM402 589h3v3h-3zM403 589h3v3h-3zM404 590h3v3h-3zM405 590h3v3h-3zM406 591h3v3h-3zM407 592h3v3h-3zM408 592h3v3h-3zM409 593h3v3h-3zM410 593h3v3h-3zM411 593h3v3h-3zM412 593h3v3h-3zM413 594h3v3h-3zM414 594h3v3h-3zM415 594h3v3h-3zM416 595h3v3h-3zM417 595h3v3h-3zM418 595h3v3h-3zM419 596h3v3h-3zM420 597h3v3h-3zM421 598h3v3h-3zM422 599h3v4h-3zM423 601h3v3h-3zM424 602h3v3h-3zM425 603h3v3h-3zM426 604h3v3h-3zM427 605h3v4h-3zM428 607h3v4h-3zM429 609h3v4h-3zM430 611h3v4h-3zM431 613h3v4h-3zM432 615h3v4h-3zM433 617h3v4h-3zM434 619h3v4h-3zM435 621h3v4h-3zM436 623h3v4h-3zM437 625h3v3h-3zM438 626h3v3h-3zM439 627h3v3h-3zM440 628h3v3h-3zM441 629h3v3h-3zM442 630h3v3h-3zM443 631h3v3h-3zM444 631h3v3h-3zM445 632h3v3h-3zM446 632h3v3h-3zM447 632h3v3h-3zM448 632h3v3h-3zM449 633h3v3h-3zM450 633h3v3h-3zM451 633h3v3h-3zM452 633h3v3h-3zM453 634h3v3h-3zM454 634h3v3h-3zM455 634h3v3h-3zM456 634h3v3h-3zM457 635h3v3h-3zM458 635h3v3h-3zM459 635h3v3h-3zM460 634h3v3h-3zM461 634h3v3h-3zM462 634h3v3h-3zM463 634h3v3h-3zM464 634h3v3h-3zM465 634h3v3h-3zM466 634h3v3h-3zM467 634h3v3h-3zM468 634h3v3h-3zM469 634h3v3h-3zM470 633h3v3h-3zM471 633h3v3h-3zM472 633h3v3h-3zM473 633h3v3h-3zM474 633h3v3h-3zM475 633h3v3h-3zM476 633h3v3h-3zM477 633h3v3h-3zM478 633h3v3h-3zM479 634h3v3h-3zM480 634h3v3h-3zM481 634h3v3h-3zM482 634h3v3h-3zM483 634h3v3h-3zM484 635h3v3h-3zM485 635h3v3h-3zM486 635h3v3h-3zM487 635h3v3h-3zM488 635h3v3h-3zM489 634h3v3h-3zM490 634h3v3h-3zM491 634h3v3h-3zM492 634h3v3h-3zM493 634h3v3h-3zM494 633h3v3h-3zM495 633h3v3h-3zM496 633h3v3h-3zM497 633h3v3h-3zM498 632h3v3h-3zM499 632h3v3h-3zM500 632h3v3h-3zM501 631h3v3h-3zM502 631h3v3h-3zM503 631h3v3h-3zM504 631h3v3h-3zM505 630h3v3h-3zM506 630h3v3h-3zM507 630h3v3h-3zM508 629h3v3h-3zM509 629h3v3h-3zM510 629h3v3h-3zM511 629h3v3h-3zM512 628h3v3h-3zM513 628h3v3h-3zM514 628h3v3h-3zM515 627h3v3h-3zM516 626h3v3h-3zM517 625h3v3h-3zM518 625h3v3h-3zM519 624h3v3h-3zM520 623h3v3h-3zM521 622h3v3h-3zM522 621h3v3h-3zM523 620h3v3h-3zM524 620h3v3h-3zM525 619h3v3h-3zM526 618h3v3h-3zM527 617h3v3h-3zM528 617h3v3h-3zM529 617h3v3h-3zM530 617h3v3h-3zM531 617h3v3h-3zM532 617h3v3h-3zM533 616h3v3h-3zM534 616h3v3h-3zM535 616h3v3h-3zM536 616h3v3h-3zM537 616h3v3h-3zM538 616h3v3h-3zM539 616h3v3h-3zM540 617h3v3h-3zM541 617h3v3h-3zM542 617h3v3h-3zM543 618h3v3h-3zM544 618h3v3h-3zM545 618h3v3h-3zM546 618h3v3h-3zM547 618h3v3h-3zM548 618h3v3h-3zM549 618h3v3h-3zM550 618h3v3h-3zM551 617h3v3h-3zM552 617h3v3h-3zM553 617h3v3h-3zM554 617h3v3h-3zM555 617h3v3h-3zM556 617h3v3h-3zM557 616h3v3h-3zM558 615h3v3h-3zM559 615h3v3h-3zM560 614h3v3h-3zM561 613h3v3h-3zM562 613h3v3h-3zM563 612h3v3h-3zM564 612h3v3h-3zM565 611h3v3h-3zM566 611h3v3h-3zM567 611h3v3h-3zM568 610h3v3h-3zM569 610h3v3h-3zM570 610h3v3h-3zM571 609h3v3h-3zM572 609h3v3h-3zM573 609h3v3h-3zM574 608h3v3h-3zM575 608h3v3h-3zM576 608h3v3h-3zM577 607h3v3h-3zM578 607h3v3h-3zM579 607h3v3h-3zM580 607h3v3h-3zM581 607h3v3h-3zM582 606h3v3h-3zM583 606h3v3h-3zM584 606h3v3h-3zM585 605h3v3h-3zM586 605h3v3h-3zM587 605h3v3h-3zM588 605h3v3h-3zM589 605h3v3h-3zM590 604h3v3h-3zM591 602h3v4h-3zM592 601h3v3h-3zM593 600h3v3h-3zM594 599h3v3h-3zM595 597h3v4h-3zM596 596h3v3h-3zM597 595h3v3h-3zM598 593h3v4h-3zM599 592h3v3h-3zM600 591h3v3h-3zM601 590h3v3h-3zM602 589h3v3h-3zM603 587h3v4h-3zM604 586h3v3h-3zM605 585h3v3h-3zM606 585h3v3h-3zM607 584h3v3h-3zM608 583h3v3h-3zM609 582h3v3h-3zM610 582h3v3h-3zM611 582h3v3h-3zM612 582h3v3h-3zM613 582h3v3h-3zM614 582h3v3h-3zM615 582h3v3h-3zM616 582h3v3h-3zM617 582h3v3h-3zM618 582h3v3h-3zM619 582h3v3h-3zM620 582h3v3h-3zM621 582h3v3h-3zM622 582h3v3h-3zM623 582h3v3h-3zM624 582h3v3h-3zM625 582h3v3h-3zM626 582h3v3h-3zM627 582h3v3h-3zM628 582h3v3h-3zM629 582h3v3h-3zM630 582h3v3h-3zM631 582h3v3h-3zM632 582h3v3h-3zM633 582h3v3h-3zM634 582h3v3h-3zM635 582h3v3h-3zM636 582h3v3h-3zM637 582h3v3h-3zM638 582h3v3h-3zM639 582h3v3h-3zM640 582h3v3h-3zM641 582h3v3h-3zM642 582h3v3h-3zM643 582h3v3h-3zM644 582h3v3h-3zM645 582h3v3h-3zM646 582h3v3h-3zM647 582h3v3h-3zM648 582h3v3h-3zM649 582h3v3h-3zM650 582h3v3h-3zM651 582h3v3h-3zM652 582h3v3h-3zM653 582h3v3h-3zM654 582h3v3h-3zM655 582h3v3h-3zM656 582h3v3h-3zM657 582h3v3h-3zM658 582h3v3h-3zM659 582h3v3h-3zM660 582h3v3h-3zM661 582h3v3h-3zM662 582h3v3h-3zM663 582h3v3h-3zM664 582h3v3h-3zM665 582h3v3h-3zM666 582h3v3h-3zM667 582h3v3h-3zM668 582h3v3h-3zM669 582h3v3h-3zM670 582h3v3h-3zM671 582h3v3h-3zM672 582h3v3h-3zM673 582h3v3h-3zM674 582h3v3h-3zM675 582h3v3h-3zM676 582h3v3h-3zM677 582h3v3h-3zM678 582h3v3h-3zM679 582h3v3h-3zM680 582h3v3h-3zM681 582h3v3h-3zM682 582h3v3h-3zM683 582h3v3h-3zM684 582h3v3h-3zM685 582h3v3h-3zM686 582h3v3h-3zM687 582h3v3h-3zM688 582h3v3h-3zM689 582h3v3h-3zM690 582h3v3h-3zM691 582h3v3h-3zM692 582h3v3h-3zM693 582h3v3h-3zM694 582h3v3h-3zM695 582h3v3h-3zM696 582h3v3h-3zM697 582h3v3h-3zM698 582h3v3h-3zM699 582h3v3h-3zM700 582h3v3h-3zM701 582h3v3h-3zM702 582h3v3h-3zM703 582h3v3h-3zM704 582h3v3h-3zM705 582h3v3h-3zM706 582h3v3h-3zM707 582h3v3h-3zM708 582h3v3h-3zM709 582h3v3h-3zM710 582h3v3h-3zM711 582h3v3h-3zM712 582h3v3h-3zM713 582h3v3h-3zM714 582h3v3h-3zM715 582h3v3h-3zM716 582h3v3h-3zM717 582h3v3h-3zM718 582h3v3h-3zM719 582h3v3h-3zM720 582h3v3h-3zM721 582h3v3h-3zM722 582h3v3h-3zM723 582h3v3h-3zM724 582h3v3h-3zM725 582h3v3h-3zM726 582h3v3h-3zM727 582h3v3h-3zM728 582h3v3h-3zM729 582h3v3h-3zM730 582h3v3h-3zM731 582h3v3h-3zM732 582h3v3h-3zM733 582h3v3h-3zM734 582h3v3h-3zM735 582h3v3h-3zM736 582h3v3h-3zM737 582h3v3h-3zM738 582h3v3h-3zM739 582h3v3h-3zM740 582h3v3h-3zM741 582h3v3h-3zM742 582h3v3h-3zM743 582h3v3h-3zM744 582h3v3h-3zM745 582h3v3h-3zM746 582h3v3h-3zM747 582h3v3h-3zM748 583h3v3h-3zM749 584h3v4h-3zM750 586h3v4h-3zM751 588h3v4h-3zM752 590h3v4h-3zM753 592h3v4h-3zM754 594h3v4h-3zM755 596h3v4h-3zM756 598h3v3h-3zM757 599h3v3h-3zM758 600h3v4h-3zM759 602h3v3h-3zM760 603h3v4h-3zM761 605h3v3h-3zM762 606h3v3h-3zM763 607h3v4h-3zM764 609h3v3h-3zM765 610h3v3h-3zM766 611h3v4h-3zM767 613h3v3h-3zM768 614h3v3h-3zM769 615h3v3h-3zM770 616h3v3h-3zM771 617h3v3h-3zM772 618h3v3h-3zM773 619h3v3h-3zM774 620h3v3h-3zM775 621h3v3h-3zM776 622h3v4h-3zM777 624h3v3h-3zM778 625h3v3h-3zM779 626h3v3h-3zM780 627h3v3h-3zM781 628h3v3h-3zM782 629h3v3h-3zM783 630h3v3h-3zM784 631h3v3h-3zM785 631h3v3h-3zM786 631h3v3h-3zM787 632h3v3h-3zM788 632h3v3h-3zM789 632h3v3h-3zM790 632h3v3h-3zM791 632h3v3h-3zM792 633h3v3h-3zM793 633h3v3h-3zM794 633h3v3h-3zM795 633h3v3h-3zM796 634h3v3h-3zM797 634h3v3h-3zM798 634h3v3h-3zM799 634h3v3h-3zM800 634h3v3h-3zM801 633h3v3h-3zM802 633h3v3h-3zM803 632h3v3h-3zM804 632h3v3h-3zM805 632h3v3h-3zM806 631h3v3h-3zM807 631h3v3h-3zM808 630h3v3h-3zM809 630h3v3h-3zM810 629h3v3h-3zM811 629h3v3h-3zM812 628h3v3h-3zM813 628h3v3h-3zM814 627h3v3h-3zM815 627h3v3h-3zM816 628h3v3h-3zM817 628h3v3h-3zM818 629h3v3h-3zM819 629h3v3h-3zM820 630h3v3h-3zM821 630h3v3h-3zM822 630h3v3h-3zM823 631h3v3h-3zM824 631h3v3h-3zM825 632h3v3h-3zM826 632h3v3h-3zM827 633h3v3h-3zM828 633h3v3h-3zM829 633h3v3h-3zM830 633h3v3h-3zM831 632h3v3h-3zM832 632h3v3h-3zM833 632h3v3h-3zM834 632h3v3h-3zM835 632h3v3h-3zM836 632h3v3h-3zM837 632h3v3h-3zM838 632h3v3h-3zM839 631h3v3h-3zM840 631h3v3h-3zM841 630h3v3h-3zM842 630h3v3h-3zM843 629h3v3h-3zM844 629h3v3h-3zM845 628h3v3h-3zM846 628h3v3h-3zM847 627h3v3h-3zM848 627h3v3h-3zM849 626h3v3h-3zM850 626h3v3h-3zM851 626h3v3h-3zM852 625h3v3h-3zM853 625h3v3h-3zM854 625h3v3h-3zM855 625h3v3h-3zM856 624h3v3h-3zM857 624h3v3h-3zM858 624h3v3h-3zM859 624h3v3h-3zM860 623h3v3h-3zM861 623h3v3h-3zM862 622h3v3h-3zM863 621h3v3h-3zM864 620h3v3h-3zM865 619h3v3h-3zM866 618h3v3h-3zM867 619h3v3h-3zM868 620h3v4h-3zM869 622h3v5h-3zM870 625h3v4h-3zM871 626h3v3h-3zM872 626h3v3h-3zM873 626h3v3h-3zM874 626h3v3h-3zM875 625h3v3h-3zM876 625h3v3h-3z"/><path fill="#00ff00" d="M-1 563h3v3h-3zM0 564h3v3h-3zM1 565h3v3h-3zM2 566h3v3h-3zM3 566h3v3h-3zM4 567h3v3h-3zM5 568h3v3h-3zM6 569h3v3h-3zM7 570h3v3h-3zM8 571h3v3h-3zM9 572h3v3h-3zM10 573h3v3h-3zM11 574h3v3h-3zM12 575h3v3h-3zM13 575h3v3h-3zM14 576h3v3h-3zM15 577h3v3h-3zM16 578h3v3h-3zM17 579h3v3h-3zM18 580h3v3h-3zM19 581h3v3h-3zM20 582h3v3h-3zM21 582h3v3h-3zM22 582h3v3h-3zM23 581h3v3h-3zM24 581h3v3h-3zM25 581h3v3h-3zM26 581h3v3h-3zM27 581h3v3h-3zM28 580h3v3h-3zM29 579h3v3h-3zM30 578h3v3h-3zM31 577h3v3h-3zM32 576h3v3h-3zM33 575h3v3h-3zM34 574h3v3h-3zM35 573h3v3h-3zM36 572h3v3h-3zM37 571h3v3h-3zM38 570h3v3h-3zM39 569h3v3h-3zM40 568h3v3h-3zM41 567h3v3h-3zM42 567h3v3h-3zM43 566h3v3h-3zM44 566h3v3h-3zM45 565h3v3h-3zM46 565h3v3h-3zM47 564h3v3h-3zM48 563h3v3h-3zM49 563h3v3h-3zM50 562h3v3h-3zM51 562h3v3h-3zM52 561h3v3h-3zM53 561h3v3h-3zM54 560h3v3h-3zM55 560h3v3h-3zM56 559h3v3h-3zM57 558h3v3h-3zM58 558h3v3h-3zM59 557h3v3h-3zM60 557h3v3h-3zM61 556h3v3h-3zM62 556h3v3h-3zM63 555h3v3h-3zM64 555h3v3h-3zM65 555h3v3h-3zM66 555h3v3h-3zM67 555h3v3h-3zM68 556h3v3h-3zM69 556h3v3h-3zM70 556h3v3h-3zM71 556h3v3h-3zM72 556h3v3h-3zM73 556h3v3h-3zM74 556h3v3h-3zM75 555h3v3h-3zM76 554h3v3h-3zM77 553h3v3h-3zM78 552h3v3h-3zM79 551h3v3h-3zM80 551h3v3h-3zM81 550h3v3h-3zM82 549h3v3h-3zM83 548h3v3h-3zM84 547h3v3h-3zM85 547h3v3h-3zM86 546h3v3h-3zM87 545h3v3h-3zM88 544h3v3h-3zM89 544h3v3h-3zM90 543h3v3h-3zM91 542h3v3h-3zM92 542h3v3h-3zM93 541h3v3h-3zM94 540h3v3h-3zM95 540h3v3h-3zM96 539h3v3h-3zM97 538h3v3h-3zM98 538h3v3h-3zM99 537h3v3h-3zM100 536h3v3h-3zM101 536h3v3h-3zM102 535h3v3h-3zM103 534h3v3h-3zM104 534h3v3h-3zM105 533h3v3h-3zM106 533h3v3h-3zM107 532h3v3h-3zM108 531h3v3h-3zM109 532h3v3h-3zM110 532h3v3h-3zM111 532h3v3h-3zM112 532h3v3h-3zM113 532h3v3h-3zM114 533h3v3h-3zM115 533h3v3h-3zM116 533h3v3h-3zM117 533h3v3h-3zM118 533h3v3h-3zM119 534h3v3h-3zM120 534h3v3h-3zM121 534h3v3h-3zM122 534h3v3h-3zM123 534h3v3h-3zM124 535h3v3h-3zM125 536h3v3h-3zM126 536h3v3h-3zM127 537h3v3h-3zM128 538h3v3h-3zM129 539h3v3h-3zM130 539h3v3h-3zM131 540h3v3h-3zM132 541h3v3h-3zM133 542h3v3h-3zM134 542h3v3h-3zM135 543h3v3h-3zM136 544h3v3h-3zM137 545h3v3h-3zM138 545h3v3h-3zM139 546h3v3h-3zM140 547h3v3h-3zM141 547h3v3h-3zM142 548h3v3h-3zM143 549h3v3h-3zM144 550h3v3h-3zM145 550h3v3h-3zM146 551h3v3h-3zM147 552h3v3h-3zM148 553h3v3h-3zM149 553h3v3h-3zM150 553h3v3h-3zM151 552h3v3h-3zM152 551h3v3h-3zM153 550h3v3h-3zM154 550h3v3h-3zM155 549h3v3h-3zM156 548h3v3h-3zM157 547h3v3h-3zM158 546h3v3h-3zM159 546h3v3h-3zM160 545h3v3h-3zM161 544h3v3h-3zM162 543h3v3h-3zM163 542h3v3h-3zM164 542h3v3h-3zM165 541h3v3h-3zM166 540h3v3h-3zM167 540h3v3h-3zM168 540h3v3h-3zM169 539h3v3h-3zM170 539h3v3h-3zM171 538h3v3h-3zM172 538h3v3h-3zM173 537h3v3h-3zM174 537h3v3h-3zM175 536h3v3h-3zM176 536h3v3h-3zM177 535h3v3h-3zM178 535h3v3h-3zM179 535h3v3h-3zM180 534h3v3h-3zM181 534h3v3h-3zM182 534h3v3h-3zM183 533h3v3h-3zM184 533h3v3h-3zM185 533h3v3h-3zM186 533h3v3h-3zM187 533h3v3h-3zM188 532h3v3h-3zM189 532h3v3h-3zM190 532h3v3h-3zM191 532h3v3h-3zM192 531h3v3h-3zM193 531h3v3h-3zM194 531h3v3h-3zM195 531h3v3h-3zM196 531h3v3h-3zM197 531h3v3h-3zM198 531h3v3h-3zM199 531h3v3h-3zM200 531h3v3h-3zM201 531h3v3h-3zM202 531h3v3h-3zM203 531h3v3h-3zM204 531h3v3h-3zM205 531h3v3h-3zM206 531h3v3h-3zM207 531h3v3h-3zM208 531h3v3h-3zM209 531h3v3h-3zM210 531h3v3h-3zM211 531h3v3h-3zM212 531h3v3h-3zM213 532h3v3h-3zM214 532h3v3h-3zM215 532h3v3h-3zM216 532h3v3h-3zM217 532h3v3h-3zM218 532h3v3h-3zM219 532h3v3h-3zM220 532h3v3h-3zM221 532h3v3h-3zM222 532h3v3h-3zM223 532h3v3h-3zM224 532h3v3h-3zM225 532h3v3h-3zM226 532h3v3h-3zM227 533h3v3h-3zM228 533h3v3h-3zM229 533h3v3h-3zM230 533h3v3h-3zM231 533h3v3h-3zM232 533h3v3h-3zM233 533h3v3h-3zM234 533h3v3h-3zM235 533h3v3h-3zM236 533h3v3h-3zM237 533h3v3h-3zM238 534h3v3h-3zM239 534h3v3h-3zM240 534h3v3h-3zM241 534h3v3h-3zM242 534h3v3h-3zM243 534h3v3h-3zM244 534h3v3h-3zM245 534h3v3h-3zM246 534h3v3h-3zM247 534h3v3h-3zM248 535h3v3h-3zM249 535h3v3h-3zM250 535h3v3h-3zM251 536h3v3h-3zM252 536h3v3h-3zM253 537h3v3h-3zM254 537h3v3h-3zM255 537h3v3h-3zM256 538h3v3h-3zM257 538h3v3h-3zM258 538h3v3h-3zM259 539h3v3h-3zM260 539h3v3h-3zM261 540h3v3h-3zM262 540h3v3h-3zM263 540h3v3h-3zM264 541h3v3h-3zM265 541h3v3h-3zM266 541h3v3h-3zM267 542h3v3h-3zM268 542h3v3h-3zM269 543h3v3h-3zM270 543h3v3h-3zM271 543h3v3h-3zM272 543h3v3h-3zM273 544h3v3h-3zM274 544h3v3h-3zM275 544h3v3h-3zM276 545h3v3h-3zM277 545h3v3h-3zM278 545h3v3h-3zM279 546h3v3h-3zM280 546h3v3h-3zM281 546h3v3h-3zM282 546h3v3h-3zM283 547h3v3h-3zM284 547h3v3h-3zM285 547h3v3h-3zM286 547h3v3h-3zM287 547h3v3h-3zM288 547h3v3h-3zM289 547h3v3h-3zM290 547h3v3h-3zM291 547h3v3h-3zM292 547h3v3h-3zM293 548h3v3h-3zM294 548h3v3h-3zM295 548h3v3h-3zM296 548h3v3h-3zM297 548h3v3h-3zM298 548h3v3h-3zM299 548h3v3h-3zM300 548h3v3h-3zM301 548h3v3h-3zM302 548h3v3h-3zM303 548h3v3h-3zM304 547h3v3h-3zM305 547h3v3h-3zM306 547h3v3h-3zM307 547h3v3h-3zM308 547h3v3h-3zM309 546h3v3h-3zM310 546h3v3h-3zM311 546h3v3h-3zM312 546h3v3h-3zM313 545h3v3h-3zM314 545h3v3h-3zM315 545h3v3h-3zM316 544h3v3h-3zM317 544h3v3h-3zM318 543h3v3h-3zM319 543h3v3h-3zM320 542h3v3h-3zM321 541h3v3h-3zM322 541h3v3h-3zM323 540h3v3h-3zM324 540h3v3h-3zM325 539h3v3h-3zM326 539h3v3h-3zM327 538h3v3h-3zM328 538h3v3h-3zM329 538h3v3h-3zM330 538h3v3h-3zM331 538h3v3h-3zM332 538h3v3h-3zM333 538h3v3h-3zM334 538h3v3h-3zM335 538h3v3h-3zM336 538h3v3h-3zM337 538h3v3h-3zM338 538h3v3h-3zM339 538h3v3h-3zM340 538h3v3h-3zM341 539h3v3h-3zM342 539h3v3h-3zM343 540h3v3h-3zM344 540h3v3h-3zM345 541h3v3h-3zM346 541h3v3h-3zM347 542h3v3h-3zM348 542h3v3h-3zM349 543h3v3h-3zM350 543h3v3h-3zM351 544h3v3h-3zM352 544h3v3h-3zM353 545h3v3h-3zM354 545h3v3h-3zM355 546h3v3h-3zM356 547h3v3h-3zM357 548h3v3h-3zM358 548h3v3h-3zM359 549h3v3h-3zM360 550h3v3h-3zM361 551h3v3h-3zM362 551h3v3h-3zM363 552h3v3h-3zM364 553h3v3h-3zM365 554h3v3h-3zM366 555h3v3h-3zM367 555h3v3h-3zM368 556h3v3h-3zM369 557h3v3h-3zM370 558h3v3h-3zM371 559h3v3h-3zM372 560h3v3h-3zM373 561h3v3h-3zM374 562h3v3h-3zM375 563h3v3h-3zM376 563h3v3h-3zM377 564h3v3h-3zM378 565h3v4h-3zM379 567h3v4h-3zM380 569h3v3h-3zM381 570h3v4h-3zM382 572h3v4h-3zM383 574h3v4h-3zM384 576h3v3h-3zM385 577h3v4h-3zM386 579h3v4h-3zM387 581h3v3h-3zM388 582h3v3h-3zM389 582h3v3h-3zM390 582h3v3h-3zM391 582h3v3h-3zM392 582h3v3h-3zM393 582h3v3h-3zM394 582h3v3h-3zM395 582h3v3h-3zM396 582h3v3h-3zM397 582h3v3h-3zM398 582h3v3h-3zM399 582h3v3h-3zM400 582h3v3h-3zM401 582h3v3h-3zM402 582h3v3h-3zM403 582h3v3h-3zM404 582h3v3h-3zM405 582h3v3h-3zM406 582h3v3h-3zM407 582h3v3h-3zM408 582h3v3h-3zM409 582h3v3h-3zM410 582h3v3h-3zM411 582h3v3h-3zM412 582h3v3h-3zM413 582h3v3h-3zM414 582h3v3h-3zM415 582h3v3h-3zM416 582h3v3h-3zM417 582h3v3h-3zM418 582h3v3h-3zM419 582h3v3h-3zM420 582h3v3h-3zM421 582h3v3h-3zM422 582h3v3h-3zM423 582h3v3h-3zM424 582h3v3h-3zM425 582h3v3h-3zM426 582h3v3h-3zM427 582h3v3h-3zM428 582h3v3h-3zM429 582h3v3h-3zM430 582h3v3h-3zM431 582h3v3h-3zM432 582h3v3h-3zM433 582h3v3h-3zM434 582h3v3h-3zM435 582h3v3h-3zM436 582h3v3h-3zM437 582h3v3h-3zM438 582h3v3h-3zM439 582h3v3h-3zM440 582h3v3h-3zM441 582h3v3h-3zM442 582h3v3h-3zM443 582h3v3h-3zM444 582h3v3h-3zM445 582h3v3h-3zM446 582h3v3h-3zM447 582h3v3h-3zM448 582h3v3h-3zM449 582h3v3h-3zM450 582h3v3h-3zM451 582h3v3h-3zM452 582h3v3h-3zM453 582h3v3h-3zM454 582h3v3h-3zM455 582h3v3h-3zM456 582h3v3h-3zM457 582h3v3h-3zM458 582h3v3h-3zM459 582h3v3h-3zM460 582h3v3h-3zM461 582h3v3h-3zM462 582h3v3h-3zM463 582h3v3h-3zM464 582h3v3h-3zM465 582h3v3h-3zM466 582h3v3h-3zM467 582h3v3h-3zM468 582h3v3h-3zM469 582h3v3h-3zM470 582h3v3h-3zM471 582h3v3h-3zM472 582h3v3h-3zM473 582h3v3h-3zM474 582h3v3h-3zM475 582h3v3h-3zM476 582h3v3h-3zM477 582h3v3h-3zM478 582h3v3h-3zM479 582h3v3h-3zM480 582h3v3h-3zM481 582h3v3h-3zM482 582h3v3h-3zM483 582h3v3h-3zM484 582h3v3h-3zM485 582h3v3h-3zM486 582h3v3h-3zM487 582h3v3h-3zM488 582h3v3h-3zM489 582h3v3h-3zM490 582h3v3h-3zM491 582h3v3h-3zM492 582h3v3h-3zM493 582h3v3h-3zM494 582h3v3h-3zM495 582h3v3h-3zM496 582h3v3h-3zM497 582h3v3h-3zM498 582h3v3h-3zM499 582h3v3h-3zM500 582h3v3h-3zM501 582h3v3h-3zM502 582h3v3h-3zM503 582h3v3h-3zM504 582h3v3h-3zM505 582h3v3h-3zM506 582h3v3h-3zM507 582h3v3h-3zM508 582h3v3h-3zM509 582h3v3h-3zM510 582h3v3h-3zM511 582h3v3h-3zM512 582h3v3h-3zM513 582h3v3h-3zM514 582h3v3h-3zM515 582h3v3h-3zM516 582h3v3h-3zM517 582h3v3h-3zM518 582h3v3h-3zM519 582h3v3h-3zM520 582h3v3h-3zM521 582h3v3h-3zM522 582h3v3h-3zM523 582h3v3h-3zM524 582h3v3h-3zM525 582h3v3h-3zM526 582h3v3h-3zM527 582h3v3h-3zM528 582h3v3h-3zM529 582h3v3h-3zM530 582h3v3h-3zM531 582h3v3h-3zM532 582h3v3h-3zM533 582h3v3h-3zM534 582h3v3h-3zM535 582h3v3h-3zM536 582h3v3h-3zM537 582h3v3h-3zM538 582h3v3h-3zM539 582h3v3h-3zM540 582h3v3h-3zM541 582h3v3h-3zM542 582h3v3h-3zM543 582h3v3h-3zM544 582h3v3h-3zM545 582h3v3h-3zM546 582h3v3h-3zM547 582h3v3h-3zM548 582h3v3h-3zM549 582h3v3h-3zM550 582h3v3h-3zM551 582h3v3h-3zM552 582h3v3h-3zM553 582h3v3h-3zM554 582h3v3h-3zM555 582h3v3h-3zM556 582h3v3h-3zM557 582h3v3h-3zM558 582h3v3h-3zM559 582h3v3h-3zM560 582h3v3h-3zM561 582h3v3h-3zM562 582h3v3h-3zM563 582h3v3h-3zM564 582h3v3h-3zM565 582h3v3h-3zM566 582h3v3h-3zM567 582h3v3h-3zM568 582h3v3h-3zM569 582h3v3h-3zM570 582h3v3h-3zM571 582h3v3h-3zM572 582h3v3h-3zM573 582h3v3h-3zM574 582h3v3h-3zM575 582h3v3h-3zM576 582h3v3h-3zM577 582h3v3h-3zM578 582h3v3h-3zM579 582h3v3h-3zM580 582h3v3h-3zM581 582h3v3h-3zM582 582h3v3h-3zM583 582h3v3h-3zM584 582h3v3h-3zM585 582h3v3h-3zM586 582h3v3h-3zM587 582h3v3h-3zM588 582h3v3h-3zM589 582h3v3h-3zM590 582h3v3h-3zM591 582h3v3h-3zM592 582h3v3h-3zM593 582h3v3h-3zM594 582h3v3h-3zM595 582h3v3h-3zM596 582h3v3h-3zM597 582h3v3h-3zM598 582h3v3h-3zM599 582h3v3h-3zM600 582h3v3h-3zM601 582h3v3h-3zM602 582h3v3h-3zM603 582h3v3h-3zM604 582h3v3h-3zM605 582h3v3h-3zM606 582h3v3h-3zM607 582h3v3h-3zM608 582h3v3h-3zM609 581h3v3h-3zM610 580h3v3h-3zM611 578h3v4h-3zM612 576h3v4h-3zM613 575h3v3h-3zM614 573h3v4h-3zM615 572h3v3h-3zM616 570h3v4h-3zM617 569h3v3h-3zM618 568h3v3h-3zM619 566h3v4h-3zM620 565h3v3h-3zM621 562h3v5h-3zM622 560h3v4h-3zM623 557h3v5h-3zM624 555h3v4h-3zM625 552h3v5h-3zM626 548h3v6h-3zM627 545h3v5h-3zM628 542h3v5h-3zM629 539h3v5h-3zM630 537h3v4h-3zM631 535h3v4h-3zM632 534h3v3h-3zM633 534h3v3h-3zM634 533h3v3h-3zM635 533h3v3h-3zM636 533h3v3h-3zM637 533h3v3h-3zM638 533h3v3h-3zM639 533h3v3h-3zM640 533h3v3h-3zM641 533h3v3h-3zM642 533h3v3h-3zM643 533h3v3h-3zM644 533h3v3h-3zM645 533h3v3h-3zM646 532h3v3h-3zM647 532h3v3h-3zM648 532h3v3h-3zM649 532h3v3h-3zM650 532h3v3h-3zM651 532h3v3h-3zM652 532h3v3h-3zM653 532h3v3h-3zM654 532h3v3h-3zM655 532h3v3h-3zM656 532h3v3h-3zM657 532h3v3h-3zM658 533h3v3h-3zM659 533h3v3h-3zM660 533h3v3h-3zM661 534h3v3h-3zM662 534h3v3h-3zM663 534h3v3h-3zM664 534h3v3h-3zM665 534h3v3h-3zM666 534h3v3h-3zM667 534h3v3h-3zM668 534h3v3h-3zM669 534h3v3h-3zM670 534h3v3h-3zM671 534h3v3h-3zM672 534h3v3h-3zM673 534h3v3h-3zM674 534h3v3h-3zM675 534h3v3h-3zM676 535h3v3h-3zM677 535h3v3h-3zM678 535h3v3h-3zM679 535h3v3h-3zM680 535h3v3h-3zM681 535h3v3h-3zM682 535h3v3h-3zM683 535h3v3h-3zM684 535h3v3h-3zM685 534h3v3h-3zM686 534h3v3h-3zM687 534h3v3h-3zM688 534h3v3h-3zM689 533h3v3h-3zM690 533h3v3h-3zM691 533h3v3h-3zM692 533h3v3h-3zM693 532h3v3h-3zM694 532h3v3h-3zM695 532h3v3h-3zM696 532h3v3h-3zM697 531h3v3h-3zM698 531h3v3h-3zM699 531h3v3h-3zM700 531h3v3h-3zM701 531h3v3h-3zM702 531h3v3h-3zM703 531h3v3h-3zM704 531h3v3h-3zM705 530h3v3h-3zM706 530h3v3h-3zM707 530h3v3h-3zM708 530h3v3h-3zM709 530h3v3h-3zM710 530h3v3h-3zM711 530h3v3h-3zM712 530h3v3h-3zM713 530h3v3h-3zM714 530h3v3h-3zM715 530h3v3h-3zM716 530h3v3h-3zM717 530h3v3h-3zM718 530h3v3h-3zM719 530h3v3h-3zM720 530h3v3h-3zM721 530h3v3h-3zM722 530h3v3h-3zM723 530h3v3h-3zM724 530h3v3h-3zM725 530h3v3h-3zM726 531h3v3h-3zM727 532h3v3h-3zM728 532h3v3h-3zM729 533h3v3h-3zM730 533h3v3h-3zM731 534h3v3h-3zM732 534h3v3h-3zM733 535h3v3h-3zM734 536h3v3h-3zM735 537h3v3h-3zM736 538h3v3h-3zM737 539h3v4h-3zM738 541h3v3h-3zM739 542h3v4h-3zM740 544h3v3h-3zM741 545h3v4h-3zM742 547h3v3h-3zM743 548h3v7h-3zM744 553h3v6h-3zM745 557h3v6h-3zM746 561h3v7h-3zM747 566h3v6h-3zM748 570h3v6h-3zM749 574h3v5h-3zM750 577h3v5h-3zM751 580h3v5h-3zM752 582h3v3h-3zM753 582h3v3h-3zM754 582h3v3h-3zM755 582h3v3h-3zM756 582h3v3h-3zM757 582h3v3h-3zM758 582h3v3h-3zM759 582h3v3h-3zM760 582h3v3h-3zM761 582h3v3h-3zM762 582h3v3h-3zM763 582h3v3h-3zM764 582h3v3h-3zM765 582h3v3h-3zM766 582h3v3h-3zM767 582h3v3h-3zM768 582h3v3h-3zM769 582h3v3h-3zM770 582h3v3h-3zM771 582h3v3h-3zM772 582h3v3h-3zM773 582h3v3h-3zM774 582h3v3h-3zM775 582h3v3h-3zM776 582h3v3h-3zM777 582h3v3h-3zM778 582h3v3h-3zM779 582h3v3h-3zM780 582h3v3h-3zM781 582h3v3h-3zM782 582h3v3h-3zM783 582h3v3h-3zM784 582h3v3h-3zM785 582h3v3h-3zM786 582h3v3h-3zM787 582h3v3h-3zM788 582h3v3h-3zM789 582h3v3h-3zM790 582h3v3h-3zM791 582h3v3h-3zM792 582h3v3h-3zM793 582h3v3h-3zM794 582h3v3h-3zM795 582h3v3h-3zM796 582h3v3h-3zM797 582h3v3h-3zM798 582h3v3h-3zM799 582h3v3h-3zM800 582h3v3h-3zM801 582h3v3h-3zM802 582h3v3h-3zM803 582h3v3h-3zM804 582h3v3h-3zM805 582h3v3h-3zM806 582h3v3h-3zM807 582h3v3h-3zM808 582h3v3h-3zM809 582h3v3h-3zM810 582h3v3h-3zM811 582h3v3h-3zM812 582h3v3h-3zM813 582h3v3h-3zM814 582h3v3h-3zM815 582h3v3h-3zM816 582h3v3h-3zM817 582h3v3h-3zM818 582h3v3h-3zM819 582h3v3h-3zM820 582h3v3h-3zM821 582h3v3h-3zM822 582h3v3h-3zM823 582h3v3h-3zM824 582h3v3h-3zM825 582h3v3h-3zM826 582h3v3h-3zM827 582h3v3h-3zM828 582h3v3h-3zM829 582h3v3h-3zM830 582h3v3h-3zM831 582h3v3h-3zM832 582h3v3h-3zM833 582h3v3h-3zM834 582h3v3h-3zM835 582h3v3h-3zM836 582h3v3h-3zM837 582h3v3h-3zM838 582h3v3h-3zM839 582h3v3h-3zM840 582h3v3h-3zM841 582h3v3h-3zM842 582h3v3h-3zM843 582h3v3h-3zM844 582h3v3h-3zM845 582h3v3h-3zM846 582h3v3h-3zM847 582h3v3h-3zM848 582h3v3h-3zM849 582h3v3h-3zM850 582h3v3h-3zM851 582h3v3h-3zM852 582h3v3h-3zM853 582h3v3h-3zM854 582h3v3h-3zM855 582h3v3h-3zM856 582h3v3h-3zM857 582h3v3h-3zM858 582h3v3h-3zM859 582h3v3h-3zM860 582h3v3h-3zM861 582h3v3h-3zM862 582h3v3h-3zM863 582h3v3h-3zM864 582h3v3h-3zM865 582h3v3h-3zM866 582h3v3h-3zM867 582h3v3h-3zM868 582h3v3h-3zM869 582h3v3h-3zM870 582h3v3h-3zM871 582h3v3h-3zM872 582h3v3h-3zM873 582h3v3h-3zM874 582h3v3h-3zM875 582h3v3h-3zM876 582h3v3h-3z"/><polygon points="3,122 14,122 8.5,128.5" fill="#fff"/><text x="21.20" y="131" font-size="14" fill="#fff" font-weight="normal" textLength="77.96" lengthAdjust="spacingAndGlyphs">USDJPY,M30</text><text x="109.20" y="131" font-size="14" fill="#fff" font-weight="normal" textLength="50.10" lengthAdjust="spacingAndGlyphs">105.355</text><text x="165.20" y="131" font-size="14" fill="#fff" font-weight="normal" textLength="50.10" lengthAdjust="spacingAndGlyphs">105.368</text><text x="221.10" y="131" font-size="14" fill="#fff" font-weight="normal" textLength="50.10" lengthAdjust="spacingAndGlyphs">105.331</text><text x="277.30" y="131" font-size="14" fill="#fff" font-weight="normal" textLength="50.10" lengthAdjust="spacingAndGlyphs">105.346</text><text x="7.80" y="178" font-size="13" fill="#ff0000" font-weight="bold" textLength="124.68" lengthAdjust="spacingAndGlyphs">Jbr_trend_indicator</text><text x="2.00" y="212" font-size="13.5" fill="#ececec" font-weight="normal" textLength="153.96" lengthAdjust="spacing"># 173765352 sell 10.00</text><text x="4.20" y="541.5" font-size="14" fill="#fff" font-weight="normal" textLength="120.82" lengthAdjust="spacingAndGlyphs">JBR Trend Indicator</text><text x="129.50" y="541.5" font-size="14" fill="#fff" font-weight="normal" textLength="42.62" lengthAdjust="spacingAndGlyphs">0.0000</text><text x="178.70" y="541.5" font-size="14" fill="#fff" font-weight="normal" textLength="46.58" lengthAdjust="spacingAndGlyphs">-0.9189</text><text x="230.70" y="541.5" font-size="14" fill="#fff" font-weight="normal" textLength="46.98" lengthAdjust="spacingAndGlyphs">-0.9189</text><text x="283.60" y="541.5" font-size="14" fill="#fff" font-weight="normal" textLength="45.98" lengthAdjust="spacingAndGlyphs">-0.8960</text><text x="334.30" y="541.5" font-size="14" fill="#fff" font-weight="normal" textLength="50.08" lengthAdjust="spacingAndGlyphs">-0.6528</text>
<g shape-rendering="geometricPrecision"><rect x="44" y="73" width="38" height="35" fill="#f7f7f7"/><rect x="44" y="73" width="1" height="35" fill="#a6a6a6"/><rect x="44" y="73" width="38" height="1" fill="#a6a6a6"/><rect x="81" y="73" width="1" height="35" fill="#e4e4e4"/><rect x="302" y="73" width="38" height="35" fill="#f7f7f7"/><rect x="302" y="73" width="1" height="35" fill="#a6a6a6"/><rect x="302" y="73" width="38" height="1" fill="#a6a6a6"/><rect x="339" y="73" width="1" height="35" fill="#e4e4e4"/><rect x="538" y="73" width="39" height="35" fill="#f7f7f7"/><rect x="538" y="73" width="1" height="35" fill="#a6a6a6"/><rect x="538" y="73" width="39" height="1" fill="#a6a6a6"/><rect x="576" y="73" width="1" height="35" fill="#e4e4e4"/><rect x="14.00" y="82" width="2" height="20.5" fill="#5c5c5c"/><rect x="11.20" y="97.9" width="21" height="2" fill="#5c5c5c"/><polygon points="15.00,80.5 12.60,84.2 17.40,84.2" fill="#5c5c5c"/><polygon points="33.50,98.9 29.80,96.5 29.80,101.3" fill="#5c5c5c"/><path d="M19.5 94.5h4.5v-10.5h3.5" stroke="#1e9a1e" stroke-width="1.8" fill="none"/><rect x="54.90" y="82" width="2" height="20.5" fill="#5c5c5c"/><rect x="52.10" y="97.9" width="21" height="2" fill="#5c5c5c"/><polygon points="55.90,80.5 53.50,84.2 58.30,84.2" fill="#5c5c5c"/><polygon points="74.40,98.9 70.70,96.5 70.70,101.3" fill="#5c5c5c"/><rect x="65" y="78" width="1.6" height="18.5" fill="#1a8a1a"/><rect x="61.9" y="81.5" width="6.6" height="12.2" rx="1" fill="#3ee03e" stroke="#1a8a1a" stroke-width="1.3"/><rect x="95.80" y="82" width="2" height="20.5" fill="#5c5c5c"/><rect x="93.00" y="97.9" width="21" height="2" fill="#5c5c5c"/><polygon points="96.80,80.5 94.40,84.2 99.20,84.2" fill="#5c5c5c"/><polygon points="115.30,98.9 111.60,96.5 111.60,101.3" fill="#5c5c5c"/><path d="M95 94.5 C99 90 101.5 86.5 104.3 86.3 C107 86.2 109.5 90.5 113 92.8" stroke="#2a8a2a" stroke-width="1.9" fill="none"/><rect x="127" y="74" width="1" height="34" fill="#8c8c8c"/><path d="M151.5 93 l7.5 7.5" stroke="#b08a20" stroke-width="4.2" stroke-linecap="round"/><path d="M151.5 93 l7.5 7.5" stroke="#e8c840" stroke-width="2" stroke-linecap="round"/><circle cx="146.5" cy="87.6" r="7.6" fill="#d6ecfa" stroke="#4a88c8" stroke-width="2"/><path d="M142.0 87.6h9" stroke="#3a78b8" stroke-width="2.6"/><path d="M146.5 83.1v9" stroke="#3a78b8" stroke-width="2.6"/><path d="M192.5 93 l7.5 7.5" stroke="#b08a20" stroke-width="4.2" stroke-linecap="round"/><path d="M192.5 93 l7.5 7.5" stroke="#e8c840" stroke-width="2" stroke-linecap="round"/><circle cx="187.5" cy="87.6" r="7.6" fill="#d6ecfa" stroke="#4a88c8" stroke-width="2"/><path d="M183.0 87.6h9" stroke="#3a78b8" stroke-width="2.6"/><rect x="219" y="78" width="12.5" height="12" rx="1" fill="#3aa03a"/><rect x="231.5" y="78" width="12.5" height="12" rx="1" fill="#2a62d0"/><rect x="219" y="90" width="12.5" height="12" rx="1" fill="#2a62d0"/><rect x="231.5" y="90" width="12.5" height="12" rx="1" fill="#3aa03a"/><rect x="220.5" y="82" width="9.5" height="6" fill="#f4f8f4"/><rect x="222.0" y="84" width="6.5" height="1" fill="#9ab"/><rect x="233" y="82" width="9.5" height="6" fill="#f4f8f4"/><rect x="234.5" y="84" width="6.5" height="1" fill="#9ab"/><rect x="220.5" y="94" width="9.5" height="6" fill="#f4f8f4"/><rect x="222.0" y="96" width="6.5" height="1" fill="#9ab"/><rect x="233" y="94" width="9.5" height="6" fill="#f4f8f4"/><rect x="234.5" y="96" width="6.5" height="1" fill="#9ab"/><rect x="256" y="74" width="1" height="34" fill="#8c8c8c"/><rect x="272.00" y="82" width="2" height="20.5" fill="#5c5c5c"/><rect x="269.20" y="97.9" width="21" height="2" fill="#5c5c5c"/><polygon points="273.00,80.5 270.60,84.2 275.40,84.2" fill="#5c5c5c"/><polygon points="291.50,98.9 287.80,96.5 287.80,101.3" fill="#5c5c5c"/><polygon points="280,84.2 280,95 286.2,89.6" fill="#2ab02a"/><rect x="313.10" y="82" width="2" height="20.5" fill="#5c5c5c"/><rect x="310.30" y="97.9" width="21" height="2" fill="#5c5c5c"/><polygon points="314.10,80.5 311.70,84.2 316.50,84.2" fill="#5c5c5c"/><polygon points="332.60,98.9 328.90,96.5 328.90,101.3" fill="#5c5c5c"/><rect x="322.2" y="81.2" width="1.9" height="15.2" fill="#1f6ea8"/><polygon points="324.3,90 328,86 328,88.7 331.7,88.7 331.7,91.3 328,91.3 328,94" fill="#e05010"/><rect x="344" y="74" width="1" height="34" fill="#8c8c8c"/><path d="M356.7 79h13l4 4v15.7h-17z" fill="#fdfdfd" stroke="#7a7a7a" stroke-width="1.2"/><path d="M365 84.5c-2 0-2.5 1-2.5 3v8M361 89h4" stroke="#555" stroke-width="1.2" fill="none"/><rect x="367.8" y="87.6" width="6.8" height="18" fill="#22c822"/><rect x="362.4" y="93.9" width="17.6" height="5.5" fill="#22c822"/><rect x="368.8" y="88.6" width="4.8" height="16" fill="#44e844"/><rect x="363.4" y="94.9" width="15.6" height="3.5" fill="#44e844"/><polygon points="389.7,88.8 399.3,88.8 394.5,94.4" fill="#000"/><circle cx="426.5" cy="90.4" r="12.3" fill="#1a5fc0"/><circle cx="426.5" cy="90.4" r="10.5" fill="#3a8ae8"/><circle cx="426.5" cy="90.4" r="7.6" fill="#f6f8fc" stroke="#20409a" stroke-width="0.6"/><path d="M426 85v5.6h4" stroke="#222" stroke-width="1.6" fill="none"/><polygon points="449.7,88.8 459.3,88.8 454.5,94.4" fill="#000"/><rect x="474.5" y="80.2" width="24" height="20.5" rx="1" fill="#fff" stroke="#3a7ad0" stroke-width="1.6"/><rect x="475" y="80.8" width="23" height="3.2" fill="#5a9ae0"/><rect x="475" y="91.6" width="23" height="1.4" fill="#5a8ad0"/><path d="M477.5 89.3l3-0.6 3-1.5 3 0.8 3-0.6 3-1.3" stroke="#b03010" stroke-width="1.5" fill="none" stroke-dasharray="2 1"/><path d="M478.5 97l3-1 3 0.5 3-1.2 3-1.5 3 2.8" stroke="#20a030" stroke-width="1.5" fill="none" stroke-dasharray="2 1"/><polygon points="509.7,88.8 519.3,88.8 514.5,94.4" fill="#000"/><path d="M531.5 76v31" stroke="#a8a8a8" stroke-width="2.5" stroke-dasharray="1 1"/><polygon points="548.8,80.8 548.8,98 552.6,94.3 556.3,101.4 559.3,100 555.6,93 561.6,92.6" fill="#4d4d4d"/><path d="M597 80v9.5M597 92.5v9.5M585.6 91h9.8M598.6 91h10.4" stroke="#505050" stroke-width="1.9"/><rect x="622" y="74" width="1" height="34" fill="#8c8c8c"/><rect x="645" y="81.4" width="2" height="20" fill="#505050"/><rect x="678.4" y="90.3" width="18.6" height="2" fill="#505050"/><rect x="718.8" y="84.8" width="19" height="13" rx="2" fill="#7c7c7c" stroke="#555" stroke-width="1.2"/><path d="M760.5 101L779.7 82" stroke="#505050" stroke-width="2"/><path d="M798.3 92.6L810.7 80.9M805.9 100.6L820 87.8" stroke="#4a4a4a" stroke-width="1.6"/><path d="M800 96l3-8 2 6 3-9 2 6 3-8 2 5" stroke="#3a3a3a" stroke-width="1.4" fill="none"/><text x="815" y="104" font-size="10.5" font-weight="bold" fill="#4a4a4a">E</text><rect x="841.2" y="79.8" width="1.7" height="1.7" fill="#555"/><rect x="844.4" y="79.8" width="1.7" height="1.7" fill="#555"/><rect x="847.6" y="79.8" width="1.7" height="1.7" fill="#555"/><rect x="850.8" y="79.8" width="1.7" height="1.7" fill="#555"/><rect x="854.0" y="79.8" width="1.7" height="1.7" fill="#555"/><rect x="857.2" y="79.8" width="1.7" height="1.7" fill="#555"/><rect x="860.4" y="79.8" width="1.7" height="1.7" fill="#555"/><rect x="841.2" y="84.2" width="1.7" height="1.7" fill="#555"/><rect x="844.4" y="84.2" width="1.7" height="1.7" fill="#555"/><rect x="847.6" y="84.2" width="1.7" height="1.7" fill="#555"/><rect x="850.8" y="84.2" width="1.7" height="1.7" fill="#555"/><rect x="854.0" y="84.2" width="1.7" height="1.7" fill="#555"/><rect x="857.2" y="84.2" width="1.7" height="1.7" fill="#555"/><rect x="860.4" y="84.2" width="1.7" height="1.7" fill="#555"/><rect x="841.2" y="90.5" width="1.7" height="1.7" fill="#555"/><rect x="844.4" y="90.5" width="1.7" height="1.7" fill="#555"/><rect x="847.6" y="90.5" width="1.7" height="1.7" fill="#555"/><rect x="850.8" y="90.5" width="1.7" height="1.7" fill="#555"/><rect x="854.0" y="90.5" width="1.7" height="1.7" fill="#555"/><rect x="857.2" y="90.5" width="1.7" height="1.7" fill="#555"/><rect x="860.4" y="90.5" width="1.7" height="1.7" fill="#555"/><rect x="841.2" y="96.7" width="1.7" height="1.7" fill="#555"/><rect x="844.4" y="96.7" width="1.7" height="1.7" fill="#555"/><rect x="847.6" y="96.7" width="1.7" height="1.7" fill="#555"/><rect x="850.8" y="96.7" width="1.7" height="1.7" fill="#555"/><rect x="854.0" y="96.7" width="1.7" height="1.7" fill="#555"/><text x="855.8" y="104" font-size="10.5" font-weight="bold" fill="#4a4a4a">F</text><text x="886" y="98.2" font-size="19" font-weight="bold" fill="#5a5a5a" textLength="12" lengthAdjust="spacingAndGlyphs">A</text><rect x="924.8" y="81.2" width="17.5" height="19.2" fill="none" stroke="#555" stroke-width="1.2" stroke-dasharray="1.4 1.4"/><rect x="928.2" y="85.2" width="11.3" height="2.3" fill="#5a5a5a"/><rect x="932.6" y="85.2" width="2.6" height="13" fill="#5a5a5a"/><polygon points="969,81.3 964,86.5 967,86.5 967,88.6 971,88.6 971,86.5 974,86.5" fill="#505050"/><path d="M966.5 92l3.5 3.5 6.5-7" stroke="#505050" stroke-width="1.8" fill="none"/><polygon points="980.4,101 975,95.5 978,95.5 978,93 982.8,93 982.8,95.5 986,95.5" fill="#505050"/><polygon points="996.7,88.8 1006.3000000000001,88.8 1001.5,94.4" fill="#000"/><rect x="1015" y="74" width="1" height="34" fill="#8c8c8c"/><path d="M1020.6 76v31" stroke="#a8a8a8" stroke-width="2.5" stroke-dasharray="1 1"/><text x="1032.5" y="96.6" font-size="14.5" fill="#505050" textLength="19.5" lengthAdjust="spacingAndGlyphs">M1</text><circle cx="1095.5" cy="87.5" r="5.4" fill="#f4f8ff" stroke="#2a64c8" stroke-width="2.2"/><path d="M1091.3 92.2l-5.4 5.2" stroke="#2a64c8" stroke-width="3.2" stroke-linecap="round"/><path d="M1148 95.5l2 2.5 0-3" fill="#777"/><ellipse cx="1145.6" cy="87.2" rx="9.6" ry="7" fill="#f2f2f4" stroke="#8a8a8a" stroke-width="1.5"/><path d="M1126 98.5l1.8 2.8 2.5-2.5" fill="#777"/><ellipse cx="1131.8" cy="93.2" rx="7.3" ry="5.6" fill="#f2f2f4" stroke="#8a8a8a" stroke-width="1.5"/></g>
<!-- title bar -->
<g shape-rendering="geometricPrecision">
<rect x="6.3" y="4.9" width="23.4" height="23.7" fill="#e8242c"/>
<text x="8.6" y="17.6" font-size="14.5" fill="#fbd0d0" style='font-family:"Liberation Serif",serif' textLength="18.6" lengthAdjust="spacingAndGlyphs">FX</text>
<text x="8.7" y="26" font-size="9" fill="#fbd0d0" style='font-family:"Liberation Serif",serif' textLength="20.6" lengthAdjust="spacingAndGlyphs">PRO</text>
<path d="M983 17.5h15" stroke="#000" stroke-width="1"/>
<rect x="1052.5" y="10.5" width="14" height="14" fill="none" stroke="#000" stroke-width="1"/>
<path d="M1123 10l15 15M1138 10l-15 15" stroke="#000" stroke-width="1"/>
<!-- MDI icon -->
<rect x="0.5" y="42.5" width="19" height="14.5" fill="#fffdf4" stroke="#4a88e8" stroke-width="1"/>
<rect x="0" y="42" width="20" height="2.6" fill="#4a88e8"/><rect x="0" y="42" width="2" height="15.5" fill="#4a88e8"/>
<path d="M3.5 49.5h3M10.5 49.5h3" stroke="#4a88e8" stroke-width="1.6"/>
<rect x="6.7" y="51.7" width="17" height="14" fill="#fffdf4" stroke="#4a88e8" stroke-width="1"/>
<rect x="6.2" y="51.2" width="18" height="2.4" fill="#4a88e8"/>
<path d="M9.5 56.5l1.5 3.5 1.5 1.5 1.5-4 1.5 4 1.5-4 1.5 3 1.5 2" stroke="#4a88e8" stroke-width="1.4" fill="none"/>
<!-- mdi buttons -->
<rect x="1078.5" y="41.5" width="27" height="27" fill="#fff" stroke="#e0e0e0"/>
<rect x="1107.5" y="41.5" width="27" height="27" fill="#fff" stroke="#e0e0e0"/>
<rect x="1136.5" y="41.5" width="27" height="27" fill="#fff" stroke="#e0e0e0"/>
<rect x="1088" y="57" width="6" height="2" fill="#5a7090"/>
<rect x="1117.5" y="52.5" width="5" height="4" fill="none" stroke="#5a7090"/><rect x="1119.5" y="50.5" width="5" height="4" fill="none" stroke="#5a7090"/>
<path d="M1147 53l5 5M1152 53l-5 5" stroke="#5a7090" stroke-width="1.6"/>
</g>
</svg>
<svg width="1159" height="667" style="position:absolute;left:0;top:0"><text x="36.60" y="25" font-size="17" fill="#000" font-weight="normal" textLength="356.02" lengthAdjust="spacingAndGlyphs">77396435: FxPro.com-Real07 - [USDJPY,M30]</text><text x="36.90" y="62" font-size="17" fill="#000" font-weight="normal" textLength="24.99" lengthAdjust="spacingAndGlyphs">File</text><text x="88.70" y="62" font-size="17" fill="#000" font-weight="normal" textLength="35.74" lengthAdjust="spacingAndGlyphs">View</text><text x="151.70" y="62" font-size="17" fill="#000" font-weight="normal" textLength="43.12" lengthAdjust="spacingAndGlyphs">Insert</text><text x="221.00" y="62" font-size="17" fill="#000" font-weight="normal" textLength="48.97" lengthAdjust="spacingAndGlyphs">Charts</text><text x="298.00" y="62" font-size="17" fill="#000" font-weight="normal" textLength="38.99" lengthAdjust="spacingAndGlyphs">Tools</text><text x="364.50" y="62" font-size="17" fill="#000" font-weight="normal" textLength="64.95" lengthAdjust="spacingAndGlyphs">Window</text><text x="456.50" y="62" font-size="17" fill="#000" font-weight="normal" textLength="35.66" lengthAdjust="spacingAndGlyphs">Help</text></svg>
</body></html>
